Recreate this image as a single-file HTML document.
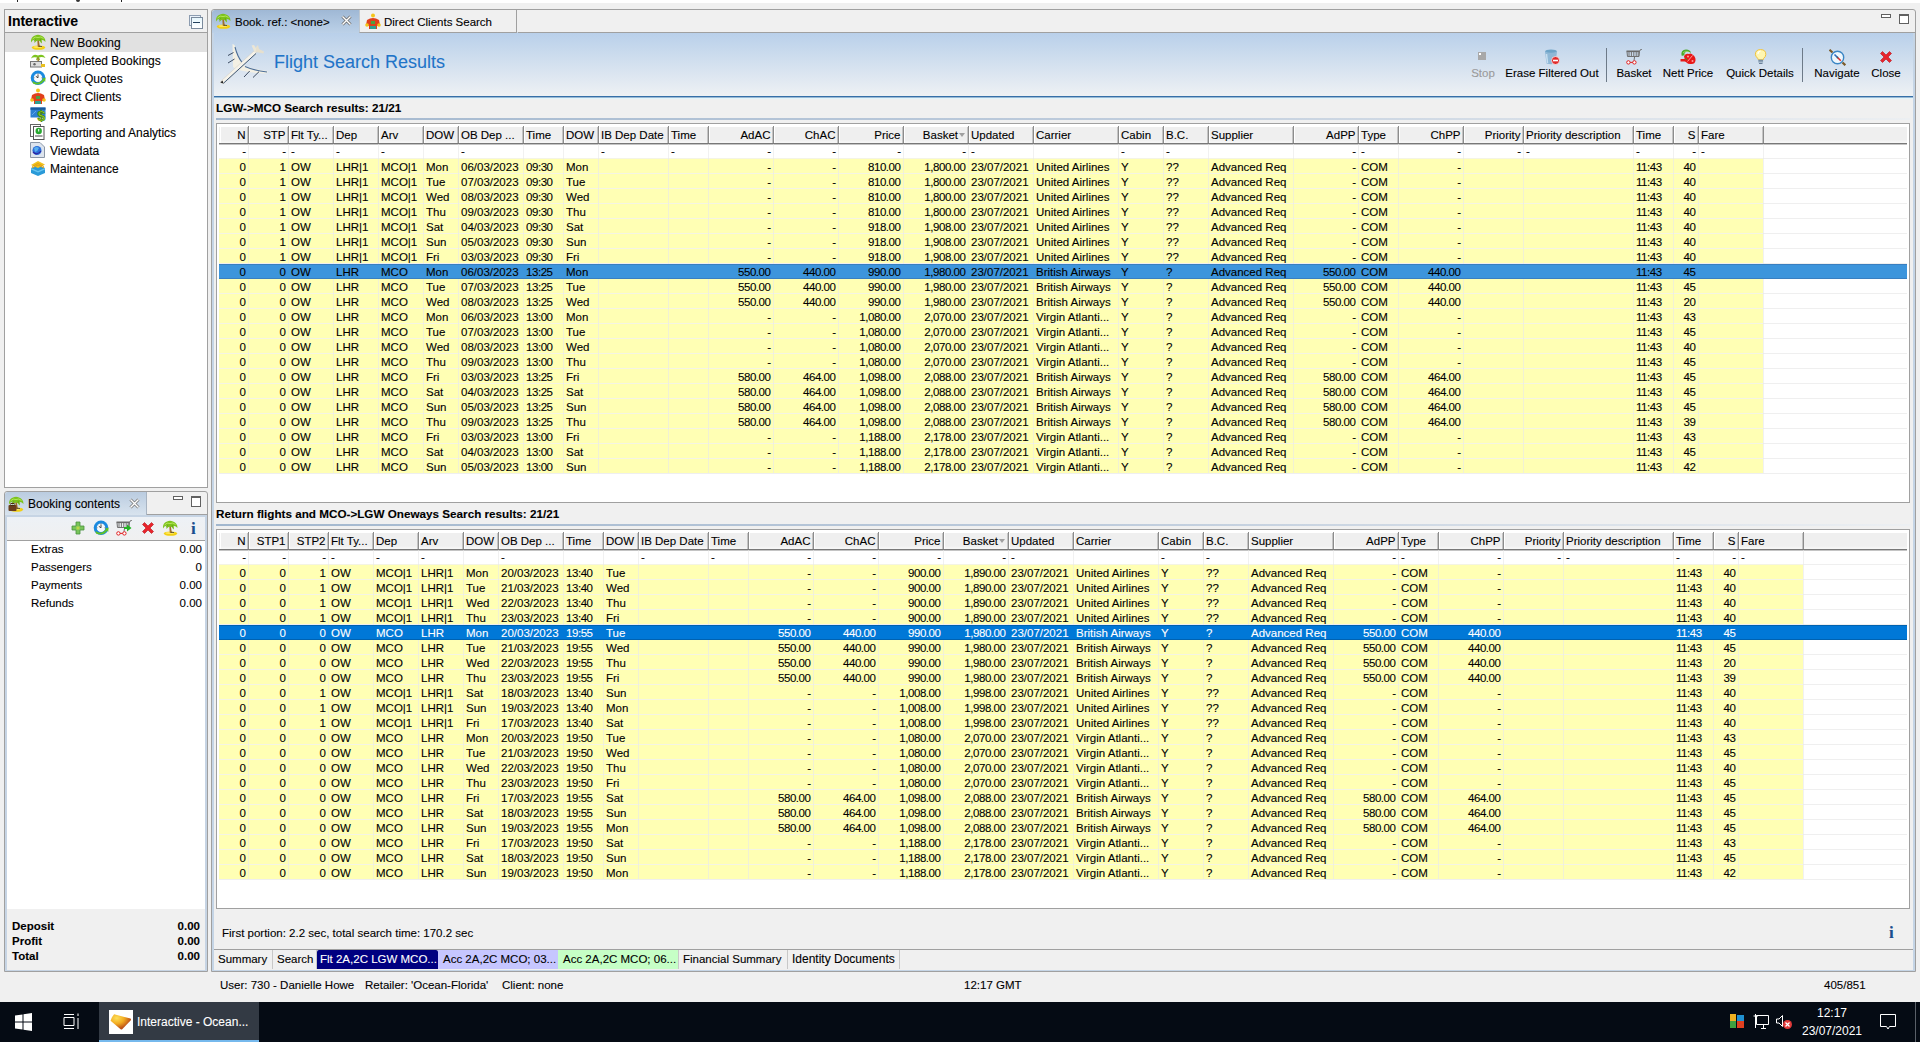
<!DOCTYPE html>
<html><head><meta charset="utf-8"><title>Interactive</title>
<style>
html,body{margin:0;padding:0}
body{width:1920px;height:1042px;overflow:hidden;background:#f0f0f0;position:relative;font-family:"Liberation Sans",sans-serif;font-size:11.5px;color:#000}
.a{position:absolute}
#topstrip{position:absolute;left:0;top:0;width:1920px;height:3px;background:#fff}
.box{position:absolute;box-sizing:border-box;border:1px solid #a0a0a0}
.txt{position:absolute;white-space:nowrap;line-height:15px}
.b{font-weight:bold}
/* tables */
.hdr{position:absolute;height:15px;background:linear-gradient(#f4f4f4,#ececec);border-bottom:2px solid #8c8c8c}
.hc{position:absolute;height:15px;line-height:15px;box-sizing:border-box;padding:0 3px;white-space:nowrap;overflow:hidden;border-right:1px solid #c8c8c8}
.hs{position:absolute;width:1px;background:#8c8c8c}
.R{text-align:right}
.L{text-align:left}
.vg{position:absolute;width:1px;background:#ededed}
.row{position:absolute;height:15px}
.row .c{position:absolute;top:0;height:15px;line-height:15px;box-sizing:border-box;padding:0 3px;white-space:nowrap;overflow:hidden}
.frow{background:transparent}
.drow{background:#ffffb4;box-shadow:inset 0 1px 0 #f4f4e4}
.sel1{background:#3d95dc;box-shadow:inset 0 1px 0 #3a7fc0,inset 0 -1px 0 #3a7fc0}
.sel2{background:#0078d7;color:#fff;box-shadow:inset 0 1px 0 #0062b0,inset 0 -1px 0 #0062b0}
.sort{position:absolute;right:0px;top:5px;width:0;height:0;border-left:4px solid transparent;border-right:4px solid transparent;border-top:5px solid #9a9a9a}
.hdr{height:16px;border-bottom:1px solid #8a8a8a}
.hc{height:16px;line-height:16px;border-right:1px solid #c4c4c4}
.frow{height:14px}
.frow .c{line-height:14px;top:0}
.drow .c,.sel1 .c,.sel2 .c{top:1px;line-height:14px}
.sel1{color:#000}
body{-webkit-text-stroke:0.2px currentColor}
.hc{padding-right:1.5px;box-shadow:inset 1px 0 0 #fff}
.vg{background:rgba(232,232,232,0.6)}
.drow .c,.sel1 .c,.sel2 .c{top:2px;line-height:14px}
.sel1 .c,.sel2 .c{top:1px}
.sel1,.sel2{height:15px}
.sort{right:2px;top:6px;border-left-width:3px;border-right-width:3px;border-top-width:4px;border-top-color:#a0a0a0}
body{-webkit-text-stroke:0.1px currentColor}
.row .c.R{padding-right:2px}
.hc{padding-left:2px}
.hg{position:absolute;height:1px;background:#efefef}
.hdr{background:linear-gradient(#efefef 0,#efefef 13px,#f6f6f6 15px);border-bottom-color:#787878;box-shadow:0 1px 0 #c4c4c4}
.row .c.n{letter-spacing:-0.45px}
.row .c.d{letter-spacing:0}
.row .c.R.n{padding-right:2.5px}

</style></head><body>
<div id="topstrip"></div>
<div class="a" style="left:17px;top:0;width:1px;height:2px;background:#222"></div>
<div class="a" style="left:76px;top:0;width:4px;height:2px;background:#333;border-radius:0 0 2px 2px"></div>
<div class="a" style="left:121px;top:0;width:1px;height:2px;background:#222"></div>

<svg width="0" height="0" style="position:absolute">
 <defs>
  <symbol id="palm" viewBox="0 0 16 16">
   <ellipse cx="8.5" cy="13.6" rx="6.8" ry="2.2" fill="#f2cf12"/>
   <ellipse cx="8" cy="13" rx="4.5" ry="1" fill="#ffe65a"/>
   <path d="M7.3 6 L8.9 6 L9.8 13 L7.8 13Z" fill="#a0702a"/>
   <path d="M9 12.2 L12 12.6" stroke="#333" stroke-width="0.8"/>
   <path d="M1 8.5 Q0.5 3 5 1.5 Q8 0 11 1.5 Q15.5 3 15.5 8 Q13.5 5.5 11.5 6 Q12.5 8 11.5 9.5 Q10 6.5 8 6.5 Q6 6.5 4.5 9 Q4 7 5 5.5 Q2.5 5.5 1 8.5Z" fill="#7cc21c"/>
   <path d="M2.5 5 Q5 2 8 3.5 Q11 2 13.5 4.5" stroke="#b4e85a" stroke-width="1" fill="none"/>
   <path d="M4 7 L5.5 5 M11 7 L10 5" stroke="#5a9a10" stroke-width="0.7"/>
  </symbol>
  <symbol id="clock" viewBox="0 0 16 16">
   <circle cx="8" cy="7.8" r="7.3" fill="#1a8ae0"/>
   <circle cx="8" cy="7.8" r="4.3" fill="#f6f9fc"/>
   <path d="M8 4.5 V7.8 L5.8 6.3" stroke="#333" stroke-width="0.9" fill="none"/>
   <circle cx="8" cy="3.8" r="0.5" fill="#555"/><circle cx="12" cy="7.8" r="0.5" fill="#555"/><circle cx="4" cy="7.8" r="0.5" fill="#555"/>
   <path d="M2.5 11 Q8 15 13 9.5 L11.8 8.8 L15.6 7.6 L15.2 12 L14 10.8 Q10 16.5 3 13.5Z" fill="#62c224"/>
  </symbol>
  <symbol id="xred" viewBox="0 0 16 16">
   <path d="M2.5 4.5 L4.5 2.5 L8 6 L11.5 2.5 L13.5 4.5 L10 8 L13.5 11.5 L11.5 13.5 L8 10 L4.5 13.5 L2.5 11.5 L6 8Z" fill="#e8242c" stroke="#b5121a" stroke-width="0.6"/>
  </symbol>
  <symbol id="cart" viewBox="0 0 16 16">
   <path d="M0.5 2.3 H13.8" stroke="#6a6a6a" stroke-width="1.6"/>
   <path d="M1 2.5 L1.5 7.5 H13 L13.5 2.5" fill="none" stroke="#707070" stroke-width="1"/>
   <path d="M3 3 V7.5 M5.4 3 V7.5 M7.8 3 V7.5 M10.2 3 V7.5 M12.2 3 V7.5" stroke="#707070" stroke-width="1"/>
   <path d="M13.5 2.5 L14.6 0.5 H15.8" stroke="#707070" stroke-width="1" fill="none"/>
   <path d="M8.6 7.8 L8 11.5" stroke="#707070" stroke-width="1"/>
   <circle cx="2.4" cy="13.4" r="1.7" fill="#fff" stroke="#e01e1e" stroke-width="1"/>
   <circle cx="8.4" cy="13.4" r="1.7" fill="#fff" stroke="#e01e1e" stroke-width="1"/>
   <path d="M4.1 13.4 H6.7" stroke="#e01e1e" stroke-width="1"/>
  </symbol>
 </defs>
</svg>

<!-- LEFT PANEL: Interactive -->
<div class="box" style="left:4px;top:9px;width:204px;height:479px;background:#fff"></div>
<div class="a" style="left:5px;top:10px;width:202px;height:22px;background:#f0f0f0;border-bottom:1px solid #a0a0a0"></div>
<div class="txt b" style="left:8px;top:14px;font-size:14px">Interactive</div>
<div class="a" style="left:189px;top:15px;width:10px;height:9px;border:1px solid #8c9cb0;background:#eaf2fa"></div>
<div class="a" style="left:191px;top:17px;width:10px;height:10px;border:1px solid #7a8a9c;background:linear-gradient(#e6f6fc,#ffffff)"></div>
<div class="a" style="left:193px;top:22px;width:7px;height:1px;background:#24405c"></div>
<div class="a" style="left:5px;top:33px;width:202px;height:19px;background:#e1e1e1"></div>
<svg class="a" style="left:30px;top:34px" width="16" height="16"><use href="#palm"/></svg>
<svg class="a" style="left:30px;top:52px" width="16" height="16"><path d="M1 6.5 Q3 1 8 3.5 Q13 1 15.5 6 Q12 4.5 9 5.5 Q10.5 7.5 10 8.5 Q8 6.5 6 8.5 Q6 7 7 5.5 Q3.5 4.5 1 6.5Z" fill="#7dc41e"/><path d="M7.3 5.5 H8.7 L9 10 H7.5Z" fill="#a8782e"/><rect x="0.5" y="9.5" width="11" height="5.5" fill="#ddd" stroke="#777" stroke-width="1"/><circle cx="4.5" cy="12.2" r="1.2" fill="#666"/><rect x="11" y="12" width="4" height="3" fill="#e8c020"/></svg>
<svg class="a" style="left:30px;top:70px" width="16" height="16"><use href="#clock"/></svg>
<svg class="a" style="left:30px;top:88px" width="16" height="16"><circle cx="8" cy="2.5" r="2" fill="#f5c518"/><path d="M2 7 Q8 3 14 7 L15 12 L12 13 V16 H4 V13 L1 12Z" fill="#e0401c"/><circle cx="2" cy="12" r="1.8" fill="#f5c518"/><circle cx="14" cy="12" r="1.8" fill="#f5c518"/><rect x="6" y="8" width="4" height="3" fill="#50a040"/><rect x="5" y="13" width="6" height="3" fill="#30a090"/></svg>
<svg class="a" style="left:30px;top:106px" width="16" height="16"><path d="M0.5 1.5 H15.5 V11.5 H0.5Z" fill="#2b80d2"/><path d="M0.5 1.5 H15.5 V3.8 H0.5Z" fill="#1a5a9c"/><path d="M2 9 L6 5" stroke="#60a8e8" stroke-width="1"/><path d="M8.5 6 L15 6 L14 13 L11 16 L8 13Z" fill="#2b80d2" opacity="0"/><text x="7.5" y="14.5" font-family="Liberation Sans" font-weight="bold" font-size="14" fill="#94d21e" stroke="#3d7a0e" stroke-width="0.6">$</text></svg>
<svg class="a" style="left:30px;top:124px" width="16" height="16"><rect x="0.5" y="0.5" width="10" height="12" fill="#fff" stroke="#666"/><rect x="3.5" y="2.5" width="10.5" height="13" fill="#fff" stroke="#555"/><circle cx="8.7" cy="7" r="3.2" fill="#28a830"/><rect x="8.2" y="5" width="1" height="2.5" fill="#fff"/><path d="M5 12 H12.5" stroke="#444"/></svg>
<svg class="a" style="left:30px;top:142px" width="16" height="16"><path d="M0.5 0.5 H10 L14.5 5 V15.5 H0.5Z" fill="#dde4ee" stroke="#8a96a6"/><circle cx="7" cy="8.5" r="4.5" fill="#2a6ed8"/><path d="M4 6 Q7 4 9 6 Q8 9 5 10Z" fill="#5ab0f0"/><path d="M3 10 Q7 14 11 9" stroke="#3020a0" stroke-width="1.2" fill="none"/></svg>
<svg class="a" style="left:30px;top:160px" width="16" height="16"><path d="M1 8 L8 5 L15 8 L15 13 L8 16 L1 13Z" fill="#2a9ad8"/><path d="M1 5 L8 1 L15 4.5 L8 8Z" fill="#f2c21e"/><path d="M2 6.5 L8 3.5 L14 6.5 M2 8 L8 5 L14 8" stroke="#e0a010" stroke-width="1" fill="none"/><path d="M1 8 L8 11 L15 8 V9.5 L8 12.5 L1 9.5Z" fill="#66c4f0"/></svg>
<div class="txt" style="left:50px;top:36px;font-size:12px">New Booking</div>
<div class="txt" style="left:50px;top:54px;font-size:12px">Completed Bookings</div>
<div class="txt" style="left:50px;top:72px;font-size:12px">Quick Quotes</div>
<div class="txt" style="left:50px;top:90px;font-size:12px">Direct Clients</div>
<div class="txt" style="left:50px;top:108px;font-size:12px">Payments</div>
<div class="txt" style="left:50px;top:126px;font-size:12px">Reporting and Analytics</div>
<div class="txt" style="left:50px;top:144px;font-size:12px">Viewdata</div>
<div class="txt" style="left:50px;top:162px;font-size:12px">Maintenance</div>

<!-- LEFT PANEL: Booking contents -->
<div class="box" style="left:4px;top:491px;width:204px;height:481px;background:#f0f0f0;border-radius:3px 3px 0 0"></div>
<div class="a" style="left:5px;top:492px;width:141px;height:23px;background:linear-gradient(#bacce0,#d8e3ee);border-right:1px solid #a8b4c2;border-top-left-radius:3px"></div>
<div class="a" style="left:147px;top:514px;width:60px;height:1px;background:#a0a0a0"></div>
<div class="a" style="left:5px;top:515px;width:202px;height:456px;box-sizing:border-box;border:2px solid #c6d4e4;border-bottom-width:1px"></div>
<div class="a" style="left:7px;top:517px;width:198px;height:23px;background:linear-gradient(#edf1f6,#f0f0f0);border-bottom:1px solid #a0a0a0"></div>
<svg class="a" style="left:8px;top:496px" width="16" height="16"><use href="#palm"/><rect x="0.5" y="9" width="8" height="6" rx="1" fill="#6a3e1e"/><rect x="3" y="7.5" width="3" height="2" fill="none" stroke="#4a2a10"/></svg>
<div class="txt" style="left:28px;top:497px;font-size:12px">Booking contents</div>
<svg class="a" style="left:129px;top:498px" width="11" height="11"><path d="M1.5 1.5 L9.5 9.5 M9.5 1.5 L1.5 9.5" stroke="#777" stroke-width="3"/><path d="M1.5 1.5 L9.5 9.5 M9.5 1.5 L1.5 9.5" stroke="#fff" stroke-width="1.4"/></svg>
<div class="a" style="left:173px;top:496px;width:8px;height:2px;border:1px solid #606060;background:#fff"></div>
<div class="a" style="left:191px;top:496px;width:8px;height:8px;border:1px solid #606060;border-top-width:2px;background:#fff"></div>
<svg class="a" style="left:71px;top:521px" width="14" height="14"><path d="M5 1 H9 V5 H13 V9 H9 V13 H5 V9 H1 V5 H5Z" fill="#78c45a" stroke="#4a9240" stroke-width="0.8"/><rect x="5.5" y="5.5" width="3" height="3" fill="#b8d84a"/></svg>
<svg class="a" style="left:93px;top:520px" width="16" height="16"><use href="#clock"/></svg>
<svg class="a" style="left:116px;top:520px" width="16" height="16"><use href="#cart"/><path d="M8 7 H11 V4.5 L15.5 8 L11 11.5 V9 H8Z" fill="#22b422"/></svg>
<svg class="a" style="left:140px;top:520px" width="16" height="16"><use href="#xred"/></svg>
<svg class="a" style="left:162px;top:520px" width="16" height="16"><use href="#palm"/></svg>
<div class="a" style="left:191px;top:520px;font-family:'Liberation Serif',serif;font-weight:bold;font-size:17px;line-height:18px;color:#1a4f8f">i</div>
<div class="a" style="left:7px;top:541px;width:198px;height:368px;background:#fff"></div>
<div class="txt" style="left:31px;top:542px">Extras</div><div class="txt" style="left:150px;top:542px;width:52px;text-align:right">0.00</div>
<div class="txt" style="left:31px;top:560px">Passengers</div><div class="txt" style="left:150px;top:560px;width:52px;text-align:right">0</div>
<div class="txt" style="left:31px;top:578px">Payments</div><div class="txt" style="left:150px;top:578px;width:52px;text-align:right">0.00</div>
<div class="txt" style="left:31px;top:596px">Refunds</div><div class="txt" style="left:150px;top:596px;width:52px;text-align:right">0.00</div>
<div class="txt b" style="left:12px;top:919px">Deposit</div><div class="txt b" style="left:150px;top:919px;width:50px;text-align:right">0.00</div>
<div class="txt b" style="left:12px;top:934px">Profit</div><div class="txt b" style="left:150px;top:934px;width:50px;text-align:right">0.00</div>
<div class="txt b" style="left:12px;top:949px">Total</div><div class="txt b" style="left:150px;top:949px;width:50px;text-align:right">0.00</div>

<!-- EDITOR -->
<div class="box" style="left:211px;top:9px;width:1705px;height:963px;background:#f0f0f0;border-radius:3px 3px 0 0"></div>
<div class="a" style="left:212px;top:32px;width:1703px;height:939px;border:2px solid #c5d5e6;border-bottom-width:1px;box-sizing:border-box"></div>
<div class="a" style="left:518px;top:32px;width:1397px;height:1px;background:#a0a0a0"></div>
<!-- tabs -->
<div class="a" style="left:212px;top:10px;width:147px;height:23px;background:linear-gradient(#9fb8d5,#bcd1e8);border-top-left-radius:3px"></div>
<svg class="a" style="left:215px;top:13px" width="16" height="16"><use href="#palm"/></svg>
<div class="txt" style="left:235px;top:15px">Book. ref.: &lt;none&gt;</div>
<svg class="a" style="left:341px;top:15px" width="11" height="11"><path d="M1.5 1.5 L9.5 9.5 M9.5 1.5 L1.5 9.5" stroke="#6a6a6a" stroke-width="3"/><path d="M1.5 1.5 L9.5 9.5 M9.5 1.5 L1.5 9.5" stroke="#fff" stroke-width="1.4"/></svg>
<div class="a" style="left:359px;top:10px;width:158px;height:22px;background:#f0f0f0;border-right:1px solid #a0a0a0;border-bottom:1px solid #a0a0a0;border-left:1px solid #c0c8d0;box-sizing:border-box;height:23px"></div>
<svg class="a" style="left:365px;top:13px" width="16" height="16"><circle cx="8" cy="2.5" r="2" fill="#f5c518"/><path d="M2 7 Q8 3 14 7 L15 12 L12 13 V16 H4 V13 L1 12Z" fill="#e0401c"/><circle cx="2" cy="12" r="1.8" fill="#f5c518"/><circle cx="14" cy="12" r="1.8" fill="#f5c518"/><rect x="6" y="8" width="4" height="3" fill="#50a040"/><rect x="5" y="13" width="6" height="3" fill="#30a090"/></svg>
<div class="txt" style="left:384px;top:15px">Direct Clients Search</div>
<div class="a" style="left:1881px;top:14px;width:8px;height:2px;border:1px solid #606060;background:#fff"></div>
<div class="a" style="left:1899px;top:14px;width:8px;height:7px;border:1px solid #606060;border-top-width:2px;background:#fff"></div>
<!-- banner -->
<div class="a" style="left:214px;top:33px;width:1699px;height:63px;background:linear-gradient(#b9d0ea,#eef1f4)"></div>
<div class="a" style="left:214px;top:96px;width:1699px;height:2px;background:linear-gradient(#3570a8 50%,#9ab8d4 50%)"></div><div class="a" style="left:214px;top:98px;width:1699px;height:1px;background:#e2f6fa"></div>
<svg class="a" style="left:214px;top:36px" width="64" height="54">
 <path d="M18.5 8 Q20.5 8 21.5 11 Q24 20 28 26 L31 29 L22 33 L19 31 Z" fill="#f3f0e4"/>
 <path d="M21 11 Q23.5 21 28.5 27" stroke="#4a6d98" stroke-width="1.1" fill="none"/>
 <path d="M29 29 Q38 33.5 53.5 35 Q54 37 52 37.5 Q40 37.5 24 34 Z" fill="#f3f0e4"/>
 <path d="M31 30.5 Q40 34.5 53 36" stroke="#4a6d98" stroke-width="1.1" fill="none"/>
 <path d="M6.5 45.5 L40 15 Q42 15 42.5 17 L10 47.5 Q7 48 6.5 45.5Z" fill="#f6f3ea" stroke="#c9c3b2" stroke-width="0.4"/>
 <path d="M9.5 47.2 L42 17.5" stroke="#3d5878" stroke-width="1"/>
 <path d="M37.5 9.5 L40 9 L43 14 L41 17 Z" fill="#ebe6d6"/>
 <path d="M42 11 L44 9 L45 13 L50 15.5 L49.5 17.5 L42 16 Z" fill="#e6e0ce"/>
 <path d="M14 19.5 L19.5 16.5 M14 27 L20.5 23 M30 41 L35.7 35 M39 41.5 L45 35.7" stroke="#2a3a50" stroke-width="0.9"/>
 <path d="M6.3 46.5 L8.5 44.5 L9.5 47.5 Z" fill="#222"/>
</svg>
<div class="txt" style="left:274px;top:52px;font-size:18px;line-height:20px;color:#1f74c8">Flight Search Results</div>

<!-- toolbar -->
<div class="a" style="left:1478px;top:52px;width:8px;height:8px;background:#a8a8a8"></div>
<div class="a" style="left:1479px;top:53px;width:2px;height:2px;background:#fff"></div>
<div class="txt" style="left:1453px;top:66px;width:60px;text-align:center;color:#9a9a9a">Stop</div>
<svg class="a" style="left:1544px;top:49px" width="16" height="16"><ellipse cx="7" cy="2.5" rx="6" ry="2" fill="#6ea4c8"/><path d="M1 2.5 L2.5 14.5 Q7 16 11.5 14.5 L13 2.5 Q7 5 1 2.5Z" fill="#8fb8d6"/><path d="M2.5 5 L3.5 14" stroke="#c8def0" stroke-width="1.5"/><circle cx="11.5" cy="11.5" r="4" fill="#e02a2a" stroke="#fff" stroke-width="0.7"/><rect x="9" y="10.7" width="5" height="1.6" fill="#fff"/></svg>
<div class="txt" style="left:1492px;top:66px;width:120px;text-align:center">Erase Filtered Out</div>
<div class="a" style="left:1606px;top:48px;width:1px;height:34px;background:#6d7a88"></div>
<svg class="a" style="left:1626px;top:49px" width="16" height="16"><use href="#cart"/></svg>
<div class="txt" style="left:1604px;top:66px;width:60px;text-align:center">Basket</div>
<svg class="a" style="left:1680px;top:49px" width="16" height="16"><path d="M1.5 6.5 Q0.5 1 6 0.5 Q10.5 0.5 11 4 Q9 2.5 6.5 2.8 Q4 3.5 4.5 6 Q3 7 1.5 6.5Z" fill="#4aa82a"/><path d="M3 4 Q5 1.5 8.5 2.5" stroke="#9ad860" stroke-width="1" fill="none"/><path d="M0.5 10 H6 V12.5 H0.5Z" fill="#e41c1c"/><path d="M4 7 Q6 4 9 5 Q11 3.5 13 6 Q15.8 8 15.5 11.5 Q15 15 11.5 15 Q8 15.5 6.5 13.5 Q4 12 4.5 9.5Z" fill="#e81818"/><path d="M7.5 12.5 L12.5 6.5" stroke="#ff9a9a" stroke-width="1"/><circle cx="8" cy="7.5" r="1" fill="#ff9a9a"/><circle cx="12.5" cy="12" r="1" fill="#ff9a9a"/><path d="M5 9 L7 11" stroke="#3a9a2a" stroke-width="1"/></svg>
<div class="txt" style="left:1648px;top:66px;width:80px;text-align:center">Nett Price</div>
<svg class="a" style="left:1753px;top:49px" width="16" height="16"><path d="M7.6 0.6 Q12.8 0.6 12.8 5.4 Q12.8 7.8 10.5 9.5 V10.5 H5 V9.5 Q2.4 7.8 2.4 5.4 Q2.4 0.6 7.6 0.6Z" fill="#fff6b0" stroke="#f2c23a" stroke-width="1"/><path d="M5 5 Q5 2.5 7.5 2" stroke="#fff" stroke-width="1.2" fill="none"/><rect x="5.3" y="10.5" width="4.8" height="3.2" fill="#9ab0c4"/><path d="M5.5 11.8 H10 M6 14.5 H9.5" stroke="#6a8098" stroke-width="1"/></svg>
<div class="txt" style="left:1715px;top:66px;width:90px;text-align:center">Quick Details</div>
<div class="a" style="left:1802px;top:48px;width:1px;height:34px;background:#6d7a88"></div>
<svg class="a" style="left:1829px;top:49px" width="17" height="17"><circle cx="8.5" cy="8.5" r="6.2" fill="#eef7fd" stroke="#3c86c4" stroke-width="1.4"/><path d="M0.5 0.8 L3.5 3.5 M13.5 13.5 L16.3 16.2" stroke="#7a5a2a" stroke-width="2.2"/><path d="M5.5 5.5 L8.8 8.8" stroke="#2a6cc0" stroke-width="1.6"/><path d="M8.8 8.8 L11.8 11.8" stroke="#e02a2a" stroke-width="1.6"/><circle cx="8.5" cy="8.5" r="0.9" fill="#555"/></svg>
<div class="txt" style="left:1807px;top:66px;width:60px;text-align:center">Navigate</div>
<svg class="a" style="left:1878px;top:49px" width="16" height="16"><use href="#xred"/></svg>
<div class="txt" style="left:1856px;top:66px;width:60px;text-align:center">Close</div>

<div class="txt b" style="left:216px;top:100px;font-size:11.7px">LGW-&gt;MCO Search results: 21/21</div>
<div class="a" style="left:216px;top:118px;width:1694px;height:2px;background:linear-gradient(to right,#a2b7ce,#bccadb 50%,#eceff2)"></div>
<div class="a" style="left:216px;top:123px;width:1694px;height:380px;background:#fff;border:1px solid #a0a0a0;box-sizing:border-box"></div>
<div class="hdr" style="top:127px;left:219px;width:1688px"></div>
<div class="hc R" style="top:127px;left:220px;width:28px;">N</div>
<div class="hs" style="top:126px;left:248px;height:17px"></div>
<div class="hc R" style="top:127px;left:249px;width:39px;">STP</div>
<div class="hs" style="top:126px;left:288px;height:17px"></div>
<div class="hc L" style="top:127px;left:289px;width:44px;">Flt Ty...</div>
<div class="hs" style="top:126px;left:333px;height:17px"></div>
<div class="hc L" style="top:127px;left:334px;width:44px;">Dep</div>
<div class="hs" style="top:126px;left:378px;height:17px"></div>
<div class="hc L" style="top:127px;left:379px;width:44px;">Arv</div>
<div class="hs" style="top:126px;left:423px;height:17px"></div>
<div class="hc L" style="top:127px;left:424px;width:34px;">DOW</div>
<div class="hs" style="top:126px;left:458px;height:17px"></div>
<div class="hc L" style="top:127px;left:459px;width:64px;">OB Dep ...</div>
<div class="hs" style="top:126px;left:523px;height:17px"></div>
<div class="hc L" style="top:127px;left:524px;width:39px;">Time</div>
<div class="hs" style="top:126px;left:563px;height:17px"></div>
<div class="hc L" style="top:127px;left:564px;width:34px;">DOW</div>
<div class="hs" style="top:126px;left:598px;height:17px"></div>
<div class="hc L" style="top:127px;left:599px;width:69px;">IB Dep Date</div>
<div class="hs" style="top:126px;left:668px;height:17px"></div>
<div class="hc L" style="top:127px;left:669px;width:39px;">Time</div>
<div class="hs" style="top:126px;left:708px;height:17px"></div>
<div class="hc R" style="top:127px;left:709px;width:64px;">AdAC</div>
<div class="hs" style="top:126px;left:773px;height:17px"></div>
<div class="hc R" style="top:127px;left:774px;width:64px;">ChAC</div>
<div class="hs" style="top:126px;left:838px;height:17px"></div>
<div class="hc R" style="top:127px;left:839px;width:64px;">Price</div>
<div class="hs" style="top:126px;left:903px;height:17px"></div>
<div class="hc R" style="top:127px;left:904px;width:64px;padding-right:9px;">Basket<i class="sort"></i></div>
<div class="hs" style="top:126px;left:968px;height:17px"></div>
<div class="hc L" style="top:127px;left:969px;width:64px;">Updated</div>
<div class="hs" style="top:126px;left:1033px;height:17px"></div>
<div class="hc L" style="top:127px;left:1034px;width:84px;">Carrier</div>
<div class="hs" style="top:126px;left:1118px;height:17px"></div>
<div class="hc L" style="top:127px;left:1119px;width:44px;">Cabin</div>
<div class="hs" style="top:126px;left:1163px;height:17px"></div>
<div class="hc L" style="top:127px;left:1164px;width:44px;">B.C.</div>
<div class="hs" style="top:126px;left:1208px;height:17px"></div>
<div class="hc L" style="top:127px;left:1209px;width:84px;">Supplier</div>
<div class="hs" style="top:126px;left:1293px;height:17px"></div>
<div class="hc R" style="top:127px;left:1294px;width:64px;">AdPP</div>
<div class="hs" style="top:126px;left:1358px;height:17px"></div>
<div class="hc L" style="top:127px;left:1359px;width:39px;">Type</div>
<div class="hs" style="top:126px;left:1398px;height:17px"></div>
<div class="hc R" style="top:127px;left:1399px;width:64px;">ChPP</div>
<div class="hs" style="top:126px;left:1463px;height:17px"></div>
<div class="hc R" style="top:127px;left:1464px;width:59px;">Priority</div>
<div class="hs" style="top:126px;left:1523px;height:17px"></div>
<div class="hc L" style="top:127px;left:1524px;width:109px;">Priority description</div>
<div class="hs" style="top:126px;left:1633px;height:17px"></div>
<div class="hc L" style="top:127px;left:1634px;width:39px;">Time</div>
<div class="hs" style="top:126px;left:1673px;height:17px"></div>
<div class="hc R" style="top:127px;left:1674px;width:24px;">S</div>
<div class="hs" style="top:126px;left:1698px;height:17px"></div>
<div class="hc L" style="top:127px;left:1699px;width:64px;">Fare</div>
<div class="hs" style="top:126px;left:1763px;height:17px"></div>
<div class="hg" style="top:158px;left:219px;width:1688px"></div>
<div class="hg" style="top:173px;left:219px;width:1688px"></div>
<div class="hg" style="top:188px;left:219px;width:1688px"></div>
<div class="hg" style="top:203px;left:219px;width:1688px"></div>
<div class="hg" style="top:218px;left:219px;width:1688px"></div>
<div class="hg" style="top:233px;left:219px;width:1688px"></div>
<div class="hg" style="top:248px;left:219px;width:1688px"></div>
<div class="hg" style="top:263px;left:219px;width:1688px"></div>
<div class="hg" style="top:278px;left:219px;width:1688px"></div>
<div class="hg" style="top:293px;left:219px;width:1688px"></div>
<div class="hg" style="top:308px;left:219px;width:1688px"></div>
<div class="hg" style="top:323px;left:219px;width:1688px"></div>
<div class="hg" style="top:338px;left:219px;width:1688px"></div>
<div class="hg" style="top:353px;left:219px;width:1688px"></div>
<div class="hg" style="top:368px;left:219px;width:1688px"></div>
<div class="hg" style="top:383px;left:219px;width:1688px"></div>
<div class="hg" style="top:398px;left:219px;width:1688px"></div>
<div class="hg" style="top:413px;left:219px;width:1688px"></div>
<div class="hg" style="top:428px;left:219px;width:1688px"></div>
<div class="hg" style="top:443px;left:219px;width:1688px"></div>
<div class="hg" style="top:458px;left:219px;width:1688px"></div>
<div class="hg" style="top:473px;left:219px;width:1688px"></div>
<div class="row frow" style="top:144px;left:219px;width:1544px"><span class="c R" style="left:0px;width:29px">-</span><span class="c R" style="left:29px;width:40px">-</span><span class="c L" style="left:69px;width:45px">-</span><span class="c L" style="left:114px;width:45px">-</span><span class="c L" style="left:159px;width:45px">-</span><span class="c L" style="left:239px;width:65px">-</span><span class="c L" style="left:379px;width:70px">-</span><span class="c L" style="left:449px;width:40px">-</span><span class="c R" style="left:489px;width:65px">-</span><span class="c R" style="left:554px;width:65px">-</span><span class="c R" style="left:619px;width:65px">-</span><span class="c R" style="left:684px;width:65px">-</span><span class="c L" style="left:749px;width:65px">-</span><span class="c L" style="left:899px;width:45px">-</span><span class="c L" style="left:944px;width:45px">-</span><span class="c R" style="left:1074px;width:65px">-</span><span class="c L" style="left:1139px;width:40px">-</span><span class="c R" style="left:1179px;width:65px">-</span><span class="c R" style="left:1244px;width:60px">-</span><span class="c L" style="left:1304px;width:110px">-</span><span class="c L" style="left:1414px;width:40px">-</span><span class="c R" style="left:1454px;width:25px">-</span><span class="c L" style="left:1479px;width:65px">-</span></div>
<div class="row drow" style="top:158px;left:219px;width:1544px"><span class="c R n" style="left:0px;width:29px">0</span><span class="c R n" style="left:29px;width:40px">1</span><span class="c L" style="left:69px;width:45px">OW</span><span class="c L" style="left:114px;width:45px">LHR|1</span><span class="c L" style="left:159px;width:45px">MCO|1</span><span class="c L" style="left:204px;width:35px">Mon</span><span class="c L d" style="left:239px;width:65px">06/03/2023</span><span class="c L n" style="left:304px;width:40px">09:30</span><span class="c L" style="left:344px;width:35px">Mon</span><span class="c R" style="left:489px;width:65px">-</span><span class="c R" style="left:554px;width:65px">-</span><span class="c R n" style="left:619px;width:65px">810.00</span><span class="c R n" style="left:684px;width:65px">1,800.00</span><span class="c L d" style="left:749px;width:65px">23/07/2021</span><span class="c L" style="left:814px;width:85px">United Airlines</span><span class="c L" style="left:899px;width:45px">Y</span><span class="c L" style="left:944px;width:45px">??</span><span class="c L" style="left:989px;width:85px">Advanced Req</span><span class="c R" style="left:1074px;width:65px">-</span><span class="c L" style="left:1139px;width:40px">COM</span><span class="c R" style="left:1179px;width:65px">-</span><span class="c L n" style="left:1414px;width:40px">11:43</span><span class="c R n" style="left:1454px;width:25px">40</span></div>
<div class="row drow" style="top:173px;left:219px;width:1544px"><span class="c R n" style="left:0px;width:29px">0</span><span class="c R n" style="left:29px;width:40px">1</span><span class="c L" style="left:69px;width:45px">OW</span><span class="c L" style="left:114px;width:45px">LHR|1</span><span class="c L" style="left:159px;width:45px">MCO|1</span><span class="c L" style="left:204px;width:35px">Tue</span><span class="c L d" style="left:239px;width:65px">07/03/2023</span><span class="c L n" style="left:304px;width:40px">09:30</span><span class="c L" style="left:344px;width:35px">Tue</span><span class="c R" style="left:489px;width:65px">-</span><span class="c R" style="left:554px;width:65px">-</span><span class="c R n" style="left:619px;width:65px">810.00</span><span class="c R n" style="left:684px;width:65px">1,800.00</span><span class="c L d" style="left:749px;width:65px">23/07/2021</span><span class="c L" style="left:814px;width:85px">United Airlines</span><span class="c L" style="left:899px;width:45px">Y</span><span class="c L" style="left:944px;width:45px">??</span><span class="c L" style="left:989px;width:85px">Advanced Req</span><span class="c R" style="left:1074px;width:65px">-</span><span class="c L" style="left:1139px;width:40px">COM</span><span class="c R" style="left:1179px;width:65px">-</span><span class="c L n" style="left:1414px;width:40px">11:43</span><span class="c R n" style="left:1454px;width:25px">40</span></div>
<div class="row drow" style="top:188px;left:219px;width:1544px"><span class="c R n" style="left:0px;width:29px">0</span><span class="c R n" style="left:29px;width:40px">1</span><span class="c L" style="left:69px;width:45px">OW</span><span class="c L" style="left:114px;width:45px">LHR|1</span><span class="c L" style="left:159px;width:45px">MCO|1</span><span class="c L" style="left:204px;width:35px">Wed</span><span class="c L d" style="left:239px;width:65px">08/03/2023</span><span class="c L n" style="left:304px;width:40px">09:30</span><span class="c L" style="left:344px;width:35px">Wed</span><span class="c R" style="left:489px;width:65px">-</span><span class="c R" style="left:554px;width:65px">-</span><span class="c R n" style="left:619px;width:65px">810.00</span><span class="c R n" style="left:684px;width:65px">1,800.00</span><span class="c L d" style="left:749px;width:65px">23/07/2021</span><span class="c L" style="left:814px;width:85px">United Airlines</span><span class="c L" style="left:899px;width:45px">Y</span><span class="c L" style="left:944px;width:45px">??</span><span class="c L" style="left:989px;width:85px">Advanced Req</span><span class="c R" style="left:1074px;width:65px">-</span><span class="c L" style="left:1139px;width:40px">COM</span><span class="c R" style="left:1179px;width:65px">-</span><span class="c L n" style="left:1414px;width:40px">11:43</span><span class="c R n" style="left:1454px;width:25px">40</span></div>
<div class="row drow" style="top:203px;left:219px;width:1544px"><span class="c R n" style="left:0px;width:29px">0</span><span class="c R n" style="left:29px;width:40px">1</span><span class="c L" style="left:69px;width:45px">OW</span><span class="c L" style="left:114px;width:45px">LHR|1</span><span class="c L" style="left:159px;width:45px">MCO|1</span><span class="c L" style="left:204px;width:35px">Thu</span><span class="c L d" style="left:239px;width:65px">09/03/2023</span><span class="c L n" style="left:304px;width:40px">09:30</span><span class="c L" style="left:344px;width:35px">Thu</span><span class="c R" style="left:489px;width:65px">-</span><span class="c R" style="left:554px;width:65px">-</span><span class="c R n" style="left:619px;width:65px">810.00</span><span class="c R n" style="left:684px;width:65px">1,800.00</span><span class="c L d" style="left:749px;width:65px">23/07/2021</span><span class="c L" style="left:814px;width:85px">United Airlines</span><span class="c L" style="left:899px;width:45px">Y</span><span class="c L" style="left:944px;width:45px">??</span><span class="c L" style="left:989px;width:85px">Advanced Req</span><span class="c R" style="left:1074px;width:65px">-</span><span class="c L" style="left:1139px;width:40px">COM</span><span class="c R" style="left:1179px;width:65px">-</span><span class="c L n" style="left:1414px;width:40px">11:43</span><span class="c R n" style="left:1454px;width:25px">40</span></div>
<div class="row drow" style="top:218px;left:219px;width:1544px"><span class="c R n" style="left:0px;width:29px">0</span><span class="c R n" style="left:29px;width:40px">1</span><span class="c L" style="left:69px;width:45px">OW</span><span class="c L" style="left:114px;width:45px">LHR|1</span><span class="c L" style="left:159px;width:45px">MCO|1</span><span class="c L" style="left:204px;width:35px">Sat</span><span class="c L d" style="left:239px;width:65px">04/03/2023</span><span class="c L n" style="left:304px;width:40px">09:30</span><span class="c L" style="left:344px;width:35px">Sat</span><span class="c R" style="left:489px;width:65px">-</span><span class="c R" style="left:554px;width:65px">-</span><span class="c R n" style="left:619px;width:65px">918.00</span><span class="c R n" style="left:684px;width:65px">1,908.00</span><span class="c L d" style="left:749px;width:65px">23/07/2021</span><span class="c L" style="left:814px;width:85px">United Airlines</span><span class="c L" style="left:899px;width:45px">Y</span><span class="c L" style="left:944px;width:45px">??</span><span class="c L" style="left:989px;width:85px">Advanced Req</span><span class="c R" style="left:1074px;width:65px">-</span><span class="c L" style="left:1139px;width:40px">COM</span><span class="c R" style="left:1179px;width:65px">-</span><span class="c L n" style="left:1414px;width:40px">11:43</span><span class="c R n" style="left:1454px;width:25px">40</span></div>
<div class="row drow" style="top:233px;left:219px;width:1544px"><span class="c R n" style="left:0px;width:29px">0</span><span class="c R n" style="left:29px;width:40px">1</span><span class="c L" style="left:69px;width:45px">OW</span><span class="c L" style="left:114px;width:45px">LHR|1</span><span class="c L" style="left:159px;width:45px">MCO|1</span><span class="c L" style="left:204px;width:35px">Sun</span><span class="c L d" style="left:239px;width:65px">05/03/2023</span><span class="c L n" style="left:304px;width:40px">09:30</span><span class="c L" style="left:344px;width:35px">Sun</span><span class="c R" style="left:489px;width:65px">-</span><span class="c R" style="left:554px;width:65px">-</span><span class="c R n" style="left:619px;width:65px">918.00</span><span class="c R n" style="left:684px;width:65px">1,908.00</span><span class="c L d" style="left:749px;width:65px">23/07/2021</span><span class="c L" style="left:814px;width:85px">United Airlines</span><span class="c L" style="left:899px;width:45px">Y</span><span class="c L" style="left:944px;width:45px">??</span><span class="c L" style="left:989px;width:85px">Advanced Req</span><span class="c R" style="left:1074px;width:65px">-</span><span class="c L" style="left:1139px;width:40px">COM</span><span class="c R" style="left:1179px;width:65px">-</span><span class="c L n" style="left:1414px;width:40px">11:43</span><span class="c R n" style="left:1454px;width:25px">40</span></div>
<div class="row drow" style="top:248px;left:219px;width:1544px"><span class="c R n" style="left:0px;width:29px">0</span><span class="c R n" style="left:29px;width:40px">1</span><span class="c L" style="left:69px;width:45px">OW</span><span class="c L" style="left:114px;width:45px">LHR|1</span><span class="c L" style="left:159px;width:45px">MCO|1</span><span class="c L" style="left:204px;width:35px">Fri</span><span class="c L d" style="left:239px;width:65px">03/03/2023</span><span class="c L n" style="left:304px;width:40px">09:30</span><span class="c L" style="left:344px;width:35px">Fri</span><span class="c R" style="left:489px;width:65px">-</span><span class="c R" style="left:554px;width:65px">-</span><span class="c R n" style="left:619px;width:65px">918.00</span><span class="c R n" style="left:684px;width:65px">1,908.00</span><span class="c L d" style="left:749px;width:65px">23/07/2021</span><span class="c L" style="left:814px;width:85px">United Airlines</span><span class="c L" style="left:899px;width:45px">Y</span><span class="c L" style="left:944px;width:45px">??</span><span class="c L" style="left:989px;width:85px">Advanced Req</span><span class="c R" style="left:1074px;width:65px">-</span><span class="c L" style="left:1139px;width:40px">COM</span><span class="c R" style="left:1179px;width:65px">-</span><span class="c L n" style="left:1414px;width:40px">11:43</span><span class="c R n" style="left:1454px;width:25px">40</span></div>
<div class="row drow" style="top:278px;left:219px;width:1544px"><span class="c R n" style="left:0px;width:29px">0</span><span class="c R n" style="left:29px;width:40px">0</span><span class="c L" style="left:69px;width:45px">OW</span><span class="c L" style="left:114px;width:45px">LHR</span><span class="c L" style="left:159px;width:45px">MCO</span><span class="c L" style="left:204px;width:35px">Tue</span><span class="c L d" style="left:239px;width:65px">07/03/2023</span><span class="c L n" style="left:304px;width:40px">13:25</span><span class="c L" style="left:344px;width:35px">Tue</span><span class="c R n" style="left:489px;width:65px">550.00</span><span class="c R n" style="left:554px;width:65px">440.00</span><span class="c R n" style="left:619px;width:65px">990.00</span><span class="c R n" style="left:684px;width:65px">1,980.00</span><span class="c L d" style="left:749px;width:65px">23/07/2021</span><span class="c L" style="left:814px;width:85px">British Airways</span><span class="c L" style="left:899px;width:45px">Y</span><span class="c L" style="left:944px;width:45px">?</span><span class="c L" style="left:989px;width:85px">Advanced Req</span><span class="c R n" style="left:1074px;width:65px">550.00</span><span class="c L" style="left:1139px;width:40px">COM</span><span class="c R n" style="left:1179px;width:65px">440.00</span><span class="c L n" style="left:1414px;width:40px">11:43</span><span class="c R n" style="left:1454px;width:25px">45</span></div>
<div class="row drow" style="top:293px;left:219px;width:1544px"><span class="c R n" style="left:0px;width:29px">0</span><span class="c R n" style="left:29px;width:40px">0</span><span class="c L" style="left:69px;width:45px">OW</span><span class="c L" style="left:114px;width:45px">LHR</span><span class="c L" style="left:159px;width:45px">MCO</span><span class="c L" style="left:204px;width:35px">Wed</span><span class="c L d" style="left:239px;width:65px">08/03/2023</span><span class="c L n" style="left:304px;width:40px">13:25</span><span class="c L" style="left:344px;width:35px">Wed</span><span class="c R n" style="left:489px;width:65px">550.00</span><span class="c R n" style="left:554px;width:65px">440.00</span><span class="c R n" style="left:619px;width:65px">990.00</span><span class="c R n" style="left:684px;width:65px">1,980.00</span><span class="c L d" style="left:749px;width:65px">23/07/2021</span><span class="c L" style="left:814px;width:85px">British Airways</span><span class="c L" style="left:899px;width:45px">Y</span><span class="c L" style="left:944px;width:45px">?</span><span class="c L" style="left:989px;width:85px">Advanced Req</span><span class="c R n" style="left:1074px;width:65px">550.00</span><span class="c L" style="left:1139px;width:40px">COM</span><span class="c R n" style="left:1179px;width:65px">440.00</span><span class="c L n" style="left:1414px;width:40px">11:43</span><span class="c R n" style="left:1454px;width:25px">20</span></div>
<div class="row drow" style="top:308px;left:219px;width:1544px"><span class="c R n" style="left:0px;width:29px">0</span><span class="c R n" style="left:29px;width:40px">0</span><span class="c L" style="left:69px;width:45px">OW</span><span class="c L" style="left:114px;width:45px">LHR</span><span class="c L" style="left:159px;width:45px">MCO</span><span class="c L" style="left:204px;width:35px">Mon</span><span class="c L d" style="left:239px;width:65px">06/03/2023</span><span class="c L n" style="left:304px;width:40px">13:00</span><span class="c L" style="left:344px;width:35px">Mon</span><span class="c R" style="left:489px;width:65px">-</span><span class="c R" style="left:554px;width:65px">-</span><span class="c R n" style="left:619px;width:65px">1,080.00</span><span class="c R n" style="left:684px;width:65px">2,070.00</span><span class="c L d" style="left:749px;width:65px">23/07/2021</span><span class="c L" style="left:814px;width:85px">Virgin Atlanti...</span><span class="c L" style="left:899px;width:45px">Y</span><span class="c L" style="left:944px;width:45px">?</span><span class="c L" style="left:989px;width:85px">Advanced Req</span><span class="c R" style="left:1074px;width:65px">-</span><span class="c L" style="left:1139px;width:40px">COM</span><span class="c R" style="left:1179px;width:65px">-</span><span class="c L n" style="left:1414px;width:40px">11:43</span><span class="c R n" style="left:1454px;width:25px">43</span></div>
<div class="row drow" style="top:323px;left:219px;width:1544px"><span class="c R n" style="left:0px;width:29px">0</span><span class="c R n" style="left:29px;width:40px">0</span><span class="c L" style="left:69px;width:45px">OW</span><span class="c L" style="left:114px;width:45px">LHR</span><span class="c L" style="left:159px;width:45px">MCO</span><span class="c L" style="left:204px;width:35px">Tue</span><span class="c L d" style="left:239px;width:65px">07/03/2023</span><span class="c L n" style="left:304px;width:40px">13:00</span><span class="c L" style="left:344px;width:35px">Tue</span><span class="c R" style="left:489px;width:65px">-</span><span class="c R" style="left:554px;width:65px">-</span><span class="c R n" style="left:619px;width:65px">1,080.00</span><span class="c R n" style="left:684px;width:65px">2,070.00</span><span class="c L d" style="left:749px;width:65px">23/07/2021</span><span class="c L" style="left:814px;width:85px">Virgin Atlanti...</span><span class="c L" style="left:899px;width:45px">Y</span><span class="c L" style="left:944px;width:45px">?</span><span class="c L" style="left:989px;width:85px">Advanced Req</span><span class="c R" style="left:1074px;width:65px">-</span><span class="c L" style="left:1139px;width:40px">COM</span><span class="c R" style="left:1179px;width:65px">-</span><span class="c L n" style="left:1414px;width:40px">11:43</span><span class="c R n" style="left:1454px;width:25px">45</span></div>
<div class="row drow" style="top:338px;left:219px;width:1544px"><span class="c R n" style="left:0px;width:29px">0</span><span class="c R n" style="left:29px;width:40px">0</span><span class="c L" style="left:69px;width:45px">OW</span><span class="c L" style="left:114px;width:45px">LHR</span><span class="c L" style="left:159px;width:45px">MCO</span><span class="c L" style="left:204px;width:35px">Wed</span><span class="c L d" style="left:239px;width:65px">08/03/2023</span><span class="c L n" style="left:304px;width:40px">13:00</span><span class="c L" style="left:344px;width:35px">Wed</span><span class="c R" style="left:489px;width:65px">-</span><span class="c R" style="left:554px;width:65px">-</span><span class="c R n" style="left:619px;width:65px">1,080.00</span><span class="c R n" style="left:684px;width:65px">2,070.00</span><span class="c L d" style="left:749px;width:65px">23/07/2021</span><span class="c L" style="left:814px;width:85px">Virgin Atlanti...</span><span class="c L" style="left:899px;width:45px">Y</span><span class="c L" style="left:944px;width:45px">?</span><span class="c L" style="left:989px;width:85px">Advanced Req</span><span class="c R" style="left:1074px;width:65px">-</span><span class="c L" style="left:1139px;width:40px">COM</span><span class="c R" style="left:1179px;width:65px">-</span><span class="c L n" style="left:1414px;width:40px">11:43</span><span class="c R n" style="left:1454px;width:25px">40</span></div>
<div class="row drow" style="top:353px;left:219px;width:1544px"><span class="c R n" style="left:0px;width:29px">0</span><span class="c R n" style="left:29px;width:40px">0</span><span class="c L" style="left:69px;width:45px">OW</span><span class="c L" style="left:114px;width:45px">LHR</span><span class="c L" style="left:159px;width:45px">MCO</span><span class="c L" style="left:204px;width:35px">Thu</span><span class="c L d" style="left:239px;width:65px">09/03/2023</span><span class="c L n" style="left:304px;width:40px">13:00</span><span class="c L" style="left:344px;width:35px">Thu</span><span class="c R" style="left:489px;width:65px">-</span><span class="c R" style="left:554px;width:65px">-</span><span class="c R n" style="left:619px;width:65px">1,080.00</span><span class="c R n" style="left:684px;width:65px">2,070.00</span><span class="c L d" style="left:749px;width:65px">23/07/2021</span><span class="c L" style="left:814px;width:85px">Virgin Atlanti...</span><span class="c L" style="left:899px;width:45px">Y</span><span class="c L" style="left:944px;width:45px">?</span><span class="c L" style="left:989px;width:85px">Advanced Req</span><span class="c R" style="left:1074px;width:65px">-</span><span class="c L" style="left:1139px;width:40px">COM</span><span class="c R" style="left:1179px;width:65px">-</span><span class="c L n" style="left:1414px;width:40px">11:43</span><span class="c R n" style="left:1454px;width:25px">45</span></div>
<div class="row drow" style="top:368px;left:219px;width:1544px"><span class="c R n" style="left:0px;width:29px">0</span><span class="c R n" style="left:29px;width:40px">0</span><span class="c L" style="left:69px;width:45px">OW</span><span class="c L" style="left:114px;width:45px">LHR</span><span class="c L" style="left:159px;width:45px">MCO</span><span class="c L" style="left:204px;width:35px">Fri</span><span class="c L d" style="left:239px;width:65px">03/03/2023</span><span class="c L n" style="left:304px;width:40px">13:25</span><span class="c L" style="left:344px;width:35px">Fri</span><span class="c R n" style="left:489px;width:65px">580.00</span><span class="c R n" style="left:554px;width:65px">464.00</span><span class="c R n" style="left:619px;width:65px">1,098.00</span><span class="c R n" style="left:684px;width:65px">2,088.00</span><span class="c L d" style="left:749px;width:65px">23/07/2021</span><span class="c L" style="left:814px;width:85px">British Airways</span><span class="c L" style="left:899px;width:45px">Y</span><span class="c L" style="left:944px;width:45px">?</span><span class="c L" style="left:989px;width:85px">Advanced Req</span><span class="c R n" style="left:1074px;width:65px">580.00</span><span class="c L" style="left:1139px;width:40px">COM</span><span class="c R n" style="left:1179px;width:65px">464.00</span><span class="c L n" style="left:1414px;width:40px">11:43</span><span class="c R n" style="left:1454px;width:25px">45</span></div>
<div class="row drow" style="top:383px;left:219px;width:1544px"><span class="c R n" style="left:0px;width:29px">0</span><span class="c R n" style="left:29px;width:40px">0</span><span class="c L" style="left:69px;width:45px">OW</span><span class="c L" style="left:114px;width:45px">LHR</span><span class="c L" style="left:159px;width:45px">MCO</span><span class="c L" style="left:204px;width:35px">Sat</span><span class="c L d" style="left:239px;width:65px">04/03/2023</span><span class="c L n" style="left:304px;width:40px">13:25</span><span class="c L" style="left:344px;width:35px">Sat</span><span class="c R n" style="left:489px;width:65px">580.00</span><span class="c R n" style="left:554px;width:65px">464.00</span><span class="c R n" style="left:619px;width:65px">1,098.00</span><span class="c R n" style="left:684px;width:65px">2,088.00</span><span class="c L d" style="left:749px;width:65px">23/07/2021</span><span class="c L" style="left:814px;width:85px">British Airways</span><span class="c L" style="left:899px;width:45px">Y</span><span class="c L" style="left:944px;width:45px">?</span><span class="c L" style="left:989px;width:85px">Advanced Req</span><span class="c R n" style="left:1074px;width:65px">580.00</span><span class="c L" style="left:1139px;width:40px">COM</span><span class="c R n" style="left:1179px;width:65px">464.00</span><span class="c L n" style="left:1414px;width:40px">11:43</span><span class="c R n" style="left:1454px;width:25px">45</span></div>
<div class="row drow" style="top:398px;left:219px;width:1544px"><span class="c R n" style="left:0px;width:29px">0</span><span class="c R n" style="left:29px;width:40px">0</span><span class="c L" style="left:69px;width:45px">OW</span><span class="c L" style="left:114px;width:45px">LHR</span><span class="c L" style="left:159px;width:45px">MCO</span><span class="c L" style="left:204px;width:35px">Sun</span><span class="c L d" style="left:239px;width:65px">05/03/2023</span><span class="c L n" style="left:304px;width:40px">13:25</span><span class="c L" style="left:344px;width:35px">Sun</span><span class="c R n" style="left:489px;width:65px">580.00</span><span class="c R n" style="left:554px;width:65px">464.00</span><span class="c R n" style="left:619px;width:65px">1,098.00</span><span class="c R n" style="left:684px;width:65px">2,088.00</span><span class="c L d" style="left:749px;width:65px">23/07/2021</span><span class="c L" style="left:814px;width:85px">British Airways</span><span class="c L" style="left:899px;width:45px">Y</span><span class="c L" style="left:944px;width:45px">?</span><span class="c L" style="left:989px;width:85px">Advanced Req</span><span class="c R n" style="left:1074px;width:65px">580.00</span><span class="c L" style="left:1139px;width:40px">COM</span><span class="c R n" style="left:1179px;width:65px">464.00</span><span class="c L n" style="left:1414px;width:40px">11:43</span><span class="c R n" style="left:1454px;width:25px">45</span></div>
<div class="row drow" style="top:413px;left:219px;width:1544px"><span class="c R n" style="left:0px;width:29px">0</span><span class="c R n" style="left:29px;width:40px">0</span><span class="c L" style="left:69px;width:45px">OW</span><span class="c L" style="left:114px;width:45px">LHR</span><span class="c L" style="left:159px;width:45px">MCO</span><span class="c L" style="left:204px;width:35px">Thu</span><span class="c L d" style="left:239px;width:65px">09/03/2023</span><span class="c L n" style="left:304px;width:40px">13:25</span><span class="c L" style="left:344px;width:35px">Thu</span><span class="c R n" style="left:489px;width:65px">580.00</span><span class="c R n" style="left:554px;width:65px">464.00</span><span class="c R n" style="left:619px;width:65px">1,098.00</span><span class="c R n" style="left:684px;width:65px">2,088.00</span><span class="c L d" style="left:749px;width:65px">23/07/2021</span><span class="c L" style="left:814px;width:85px">British Airways</span><span class="c L" style="left:899px;width:45px">Y</span><span class="c L" style="left:944px;width:45px">?</span><span class="c L" style="left:989px;width:85px">Advanced Req</span><span class="c R n" style="left:1074px;width:65px">580.00</span><span class="c L" style="left:1139px;width:40px">COM</span><span class="c R n" style="left:1179px;width:65px">464.00</span><span class="c L n" style="left:1414px;width:40px">11:43</span><span class="c R n" style="left:1454px;width:25px">39</span></div>
<div class="row drow" style="top:428px;left:219px;width:1544px"><span class="c R n" style="left:0px;width:29px">0</span><span class="c R n" style="left:29px;width:40px">0</span><span class="c L" style="left:69px;width:45px">OW</span><span class="c L" style="left:114px;width:45px">LHR</span><span class="c L" style="left:159px;width:45px">MCO</span><span class="c L" style="left:204px;width:35px">Fri</span><span class="c L d" style="left:239px;width:65px">03/03/2023</span><span class="c L n" style="left:304px;width:40px">13:00</span><span class="c L" style="left:344px;width:35px">Fri</span><span class="c R" style="left:489px;width:65px">-</span><span class="c R" style="left:554px;width:65px">-</span><span class="c R n" style="left:619px;width:65px">1,188.00</span><span class="c R n" style="left:684px;width:65px">2,178.00</span><span class="c L d" style="left:749px;width:65px">23/07/2021</span><span class="c L" style="left:814px;width:85px">Virgin Atlanti...</span><span class="c L" style="left:899px;width:45px">Y</span><span class="c L" style="left:944px;width:45px">?</span><span class="c L" style="left:989px;width:85px">Advanced Req</span><span class="c R" style="left:1074px;width:65px">-</span><span class="c L" style="left:1139px;width:40px">COM</span><span class="c R" style="left:1179px;width:65px">-</span><span class="c L n" style="left:1414px;width:40px">11:43</span><span class="c R n" style="left:1454px;width:25px">43</span></div>
<div class="row drow" style="top:443px;left:219px;width:1544px"><span class="c R n" style="left:0px;width:29px">0</span><span class="c R n" style="left:29px;width:40px">0</span><span class="c L" style="left:69px;width:45px">OW</span><span class="c L" style="left:114px;width:45px">LHR</span><span class="c L" style="left:159px;width:45px">MCO</span><span class="c L" style="left:204px;width:35px">Sat</span><span class="c L d" style="left:239px;width:65px">04/03/2023</span><span class="c L n" style="left:304px;width:40px">13:00</span><span class="c L" style="left:344px;width:35px">Sat</span><span class="c R" style="left:489px;width:65px">-</span><span class="c R" style="left:554px;width:65px">-</span><span class="c R n" style="left:619px;width:65px">1,188.00</span><span class="c R n" style="left:684px;width:65px">2,178.00</span><span class="c L d" style="left:749px;width:65px">23/07/2021</span><span class="c L" style="left:814px;width:85px">Virgin Atlanti...</span><span class="c L" style="left:899px;width:45px">Y</span><span class="c L" style="left:944px;width:45px">?</span><span class="c L" style="left:989px;width:85px">Advanced Req</span><span class="c R" style="left:1074px;width:65px">-</span><span class="c L" style="left:1139px;width:40px">COM</span><span class="c R" style="left:1179px;width:65px">-</span><span class="c L n" style="left:1414px;width:40px">11:43</span><span class="c R n" style="left:1454px;width:25px">45</span></div>
<div class="row drow" style="top:458px;left:219px;width:1544px"><span class="c R n" style="left:0px;width:29px">0</span><span class="c R n" style="left:29px;width:40px">0</span><span class="c L" style="left:69px;width:45px">OW</span><span class="c L" style="left:114px;width:45px">LHR</span><span class="c L" style="left:159px;width:45px">MCO</span><span class="c L" style="left:204px;width:35px">Sun</span><span class="c L d" style="left:239px;width:65px">05/03/2023</span><span class="c L n" style="left:304px;width:40px">13:00</span><span class="c L" style="left:344px;width:35px">Sun</span><span class="c R" style="left:489px;width:65px">-</span><span class="c R" style="left:554px;width:65px">-</span><span class="c R n" style="left:619px;width:65px">1,188.00</span><span class="c R n" style="left:684px;width:65px">2,178.00</span><span class="c L d" style="left:749px;width:65px">23/07/2021</span><span class="c L" style="left:814px;width:85px">Virgin Atlanti...</span><span class="c L" style="left:899px;width:45px">Y</span><span class="c L" style="left:944px;width:45px">?</span><span class="c L" style="left:989px;width:85px">Advanced Req</span><span class="c R" style="left:1074px;width:65px">-</span><span class="c L" style="left:1139px;width:40px">COM</span><span class="c R" style="left:1179px;width:65px">-</span><span class="c L n" style="left:1414px;width:40px">11:43</span><span class="c R n" style="left:1454px;width:25px">42</span></div>
<div class="vg" style="top:144px;left:248px;height:329px"></div>
<div class="vg" style="top:144px;left:288px;height:329px"></div>
<div class="vg" style="top:144px;left:333px;height:329px"></div>
<div class="vg" style="top:144px;left:378px;height:329px"></div>
<div class="vg" style="top:144px;left:423px;height:329px"></div>
<div class="vg" style="top:144px;left:458px;height:329px"></div>
<div class="vg" style="top:144px;left:523px;height:329px"></div>
<div class="vg" style="top:144px;left:563px;height:329px"></div>
<div class="vg" style="top:144px;left:598px;height:329px"></div>
<div class="vg" style="top:144px;left:668px;height:329px"></div>
<div class="vg" style="top:144px;left:708px;height:329px"></div>
<div class="vg" style="top:144px;left:773px;height:329px"></div>
<div class="vg" style="top:144px;left:838px;height:329px"></div>
<div class="vg" style="top:144px;left:903px;height:329px"></div>
<div class="vg" style="top:144px;left:968px;height:329px"></div>
<div class="vg" style="top:144px;left:1033px;height:329px"></div>
<div class="vg" style="top:144px;left:1118px;height:329px"></div>
<div class="vg" style="top:144px;left:1163px;height:329px"></div>
<div class="vg" style="top:144px;left:1208px;height:329px"></div>
<div class="vg" style="top:144px;left:1293px;height:329px"></div>
<div class="vg" style="top:144px;left:1358px;height:329px"></div>
<div class="vg" style="top:144px;left:1398px;height:329px"></div>
<div class="vg" style="top:144px;left:1463px;height:329px"></div>
<div class="vg" style="top:144px;left:1523px;height:329px"></div>
<div class="vg" style="top:144px;left:1633px;height:329px"></div>
<div class="vg" style="top:144px;left:1673px;height:329px"></div>
<div class="vg" style="top:144px;left:1698px;height:329px"></div>
<div class="vg" style="top:144px;left:1763px;height:329px"></div>
<div class="row sel1" style="top:264px;left:219px;width:1688px"><span class="c R n" style="left:0px;width:29px">0</span><span class="c R n" style="left:29px;width:40px">0</span><span class="c L" style="left:69px;width:45px">OW</span><span class="c L" style="left:114px;width:45px">LHR</span><span class="c L" style="left:159px;width:45px">MCO</span><span class="c L" style="left:204px;width:35px">Mon</span><span class="c L d" style="left:239px;width:65px">06/03/2023</span><span class="c L n" style="left:304px;width:40px">13:25</span><span class="c L" style="left:344px;width:35px">Mon</span><span class="c R n" style="left:489px;width:65px">550.00</span><span class="c R n" style="left:554px;width:65px">440.00</span><span class="c R n" style="left:619px;width:65px">990.00</span><span class="c R n" style="left:684px;width:65px">1,980.00</span><span class="c L d" style="left:749px;width:65px">23/07/2021</span><span class="c L" style="left:814px;width:85px">British Airways</span><span class="c L" style="left:899px;width:45px">Y</span><span class="c L" style="left:944px;width:45px">?</span><span class="c L" style="left:989px;width:85px">Advanced Req</span><span class="c R n" style="left:1074px;width:65px">550.00</span><span class="c L" style="left:1139px;width:40px">COM</span><span class="c R n" style="left:1179px;width:65px">440.00</span><span class="c L n" style="left:1414px;width:40px">11:43</span><span class="c R n" style="left:1454px;width:25px">45</span></div>

<div class="txt b" style="left:216px;top:506px;font-size:11.7px">Return flights and MCO-&gt;LGW Oneways Search results: 21/21</div>
<div class="a" style="left:216px;top:524px;width:1694px;height:2px;background:linear-gradient(to right,#a2b7ce,#bccadb 50%,#eceff2)"></div>
<div class="a" style="left:216px;top:529px;width:1694px;height:380px;background:#fff;border:1px solid #a0a0a0;box-sizing:border-box"></div>
<div class="hdr" style="top:533px;left:219px;width:1688px"></div>
<div class="hc R" style="top:533px;left:220px;width:28px;">N</div>
<div class="hs" style="top:532px;left:248px;height:17px"></div>
<div class="hc R" style="top:533px;left:249px;width:39px;">STP1</div>
<div class="hs" style="top:532px;left:288px;height:17px"></div>
<div class="hc R" style="top:533px;left:289px;width:39px;">STP2</div>
<div class="hs" style="top:532px;left:328px;height:17px"></div>
<div class="hc L" style="top:533px;left:329px;width:44px;">Flt Ty...</div>
<div class="hs" style="top:532px;left:373px;height:17px"></div>
<div class="hc L" style="top:533px;left:374px;width:44px;">Dep</div>
<div class="hs" style="top:532px;left:418px;height:17px"></div>
<div class="hc L" style="top:533px;left:419px;width:44px;">Arv</div>
<div class="hs" style="top:532px;left:463px;height:17px"></div>
<div class="hc L" style="top:533px;left:464px;width:34px;">DOW</div>
<div class="hs" style="top:532px;left:498px;height:17px"></div>
<div class="hc L" style="top:533px;left:499px;width:64px;">OB Dep ...</div>
<div class="hs" style="top:532px;left:563px;height:17px"></div>
<div class="hc L" style="top:533px;left:564px;width:39px;">Time</div>
<div class="hs" style="top:532px;left:603px;height:17px"></div>
<div class="hc L" style="top:533px;left:604px;width:34px;">DOW</div>
<div class="hs" style="top:532px;left:638px;height:17px"></div>
<div class="hc L" style="top:533px;left:639px;width:69px;">IB Dep Date</div>
<div class="hs" style="top:532px;left:708px;height:17px"></div>
<div class="hc L" style="top:533px;left:709px;width:39px;">Time</div>
<div class="hs" style="top:532px;left:748px;height:17px"></div>
<div class="hc R" style="top:533px;left:749px;width:64px;">AdAC</div>
<div class="hs" style="top:532px;left:813px;height:17px"></div>
<div class="hc R" style="top:533px;left:814px;width:64px;">ChAC</div>
<div class="hs" style="top:532px;left:878px;height:17px"></div>
<div class="hc R" style="top:533px;left:879px;width:64px;">Price</div>
<div class="hs" style="top:532px;left:943px;height:17px"></div>
<div class="hc R" style="top:533px;left:944px;width:64px;padding-right:9px;">Basket<i class="sort"></i></div>
<div class="hs" style="top:532px;left:1008px;height:17px"></div>
<div class="hc L" style="top:533px;left:1009px;width:64px;">Updated</div>
<div class="hs" style="top:532px;left:1073px;height:17px"></div>
<div class="hc L" style="top:533px;left:1074px;width:84px;">Carrier</div>
<div class="hs" style="top:532px;left:1158px;height:17px"></div>
<div class="hc L" style="top:533px;left:1159px;width:44px;">Cabin</div>
<div class="hs" style="top:532px;left:1203px;height:17px"></div>
<div class="hc L" style="top:533px;left:1204px;width:44px;">B.C.</div>
<div class="hs" style="top:532px;left:1248px;height:17px"></div>
<div class="hc L" style="top:533px;left:1249px;width:84px;">Supplier</div>
<div class="hs" style="top:532px;left:1333px;height:17px"></div>
<div class="hc R" style="top:533px;left:1334px;width:64px;">AdPP</div>
<div class="hs" style="top:532px;left:1398px;height:17px"></div>
<div class="hc L" style="top:533px;left:1399px;width:39px;">Type</div>
<div class="hs" style="top:532px;left:1438px;height:17px"></div>
<div class="hc R" style="top:533px;left:1439px;width:64px;">ChPP</div>
<div class="hs" style="top:532px;left:1503px;height:17px"></div>
<div class="hc R" style="top:533px;left:1504px;width:59px;">Priority</div>
<div class="hs" style="top:532px;left:1563px;height:17px"></div>
<div class="hc L" style="top:533px;left:1564px;width:109px;">Priority description</div>
<div class="hs" style="top:532px;left:1673px;height:17px"></div>
<div class="hc L" style="top:533px;left:1674px;width:39px;">Time</div>
<div class="hs" style="top:532px;left:1713px;height:17px"></div>
<div class="hc R" style="top:533px;left:1714px;width:24px;">S</div>
<div class="hs" style="top:532px;left:1738px;height:17px"></div>
<div class="hc L" style="top:533px;left:1739px;width:64px;">Fare</div>
<div class="hs" style="top:532px;left:1803px;height:17px"></div>
<div class="hg" style="top:564px;left:219px;width:1688px"></div>
<div class="hg" style="top:579px;left:219px;width:1688px"></div>
<div class="hg" style="top:594px;left:219px;width:1688px"></div>
<div class="hg" style="top:609px;left:219px;width:1688px"></div>
<div class="hg" style="top:624px;left:219px;width:1688px"></div>
<div class="hg" style="top:639px;left:219px;width:1688px"></div>
<div class="hg" style="top:654px;left:219px;width:1688px"></div>
<div class="hg" style="top:669px;left:219px;width:1688px"></div>
<div class="hg" style="top:684px;left:219px;width:1688px"></div>
<div class="hg" style="top:699px;left:219px;width:1688px"></div>
<div class="hg" style="top:714px;left:219px;width:1688px"></div>
<div class="hg" style="top:729px;left:219px;width:1688px"></div>
<div class="hg" style="top:744px;left:219px;width:1688px"></div>
<div class="hg" style="top:759px;left:219px;width:1688px"></div>
<div class="hg" style="top:774px;left:219px;width:1688px"></div>
<div class="hg" style="top:789px;left:219px;width:1688px"></div>
<div class="hg" style="top:804px;left:219px;width:1688px"></div>
<div class="hg" style="top:819px;left:219px;width:1688px"></div>
<div class="hg" style="top:834px;left:219px;width:1688px"></div>
<div class="hg" style="top:849px;left:219px;width:1688px"></div>
<div class="hg" style="top:864px;left:219px;width:1688px"></div>
<div class="hg" style="top:879px;left:219px;width:1688px"></div>
<div class="row frow" style="top:550px;left:219px;width:1584px"><span class="c R" style="left:0px;width:29px">-</span><span class="c R" style="left:29px;width:40px">-</span><span class="c R" style="left:69px;width:40px">-</span><span class="c L" style="left:109px;width:45px">-</span><span class="c L" style="left:154px;width:45px">-</span><span class="c L" style="left:199px;width:45px">-</span><span class="c L" style="left:279px;width:65px">-</span><span class="c L" style="left:419px;width:70px">-</span><span class="c L" style="left:489px;width:40px">-</span><span class="c R" style="left:529px;width:65px">-</span><span class="c R" style="left:594px;width:65px">-</span><span class="c R" style="left:659px;width:65px">-</span><span class="c R" style="left:724px;width:65px">-</span><span class="c L" style="left:789px;width:65px">-</span><span class="c L" style="left:939px;width:45px">-</span><span class="c L" style="left:984px;width:45px">-</span><span class="c R" style="left:1114px;width:65px">-</span><span class="c L" style="left:1179px;width:40px">-</span><span class="c R" style="left:1219px;width:65px">-</span><span class="c R" style="left:1284px;width:60px">-</span><span class="c L" style="left:1344px;width:110px">-</span><span class="c L" style="left:1454px;width:40px">-</span><span class="c R" style="left:1494px;width:25px">-</span><span class="c L" style="left:1519px;width:65px">-</span></div>
<div class="row drow" style="top:564px;left:219px;width:1584px"><span class="c R n" style="left:0px;width:29px">0</span><span class="c R n" style="left:29px;width:40px">0</span><span class="c R n" style="left:69px;width:40px">1</span><span class="c L" style="left:109px;width:45px">OW</span><span class="c L" style="left:154px;width:45px">MCO|1</span><span class="c L" style="left:199px;width:45px">LHR|1</span><span class="c L" style="left:244px;width:35px">Mon</span><span class="c L d" style="left:279px;width:65px">20/03/2023</span><span class="c L n" style="left:344px;width:40px">13:40</span><span class="c L" style="left:384px;width:35px">Tue</span><span class="c R" style="left:529px;width:65px">-</span><span class="c R" style="left:594px;width:65px">-</span><span class="c R n" style="left:659px;width:65px">900.00</span><span class="c R n" style="left:724px;width:65px">1,890.00</span><span class="c L d" style="left:789px;width:65px">23/07/2021</span><span class="c L" style="left:854px;width:85px">United Airlines</span><span class="c L" style="left:939px;width:45px">Y</span><span class="c L" style="left:984px;width:45px">??</span><span class="c L" style="left:1029px;width:85px">Advanced Req</span><span class="c R" style="left:1114px;width:65px">-</span><span class="c L" style="left:1179px;width:40px">COM</span><span class="c R" style="left:1219px;width:65px">-</span><span class="c L n" style="left:1454px;width:40px">11:43</span><span class="c R n" style="left:1494px;width:25px">40</span></div>
<div class="row drow" style="top:579px;left:219px;width:1584px"><span class="c R n" style="left:0px;width:29px">0</span><span class="c R n" style="left:29px;width:40px">0</span><span class="c R n" style="left:69px;width:40px">1</span><span class="c L" style="left:109px;width:45px">OW</span><span class="c L" style="left:154px;width:45px">MCO|1</span><span class="c L" style="left:199px;width:45px">LHR|1</span><span class="c L" style="left:244px;width:35px">Tue</span><span class="c L d" style="left:279px;width:65px">21/03/2023</span><span class="c L n" style="left:344px;width:40px">13:40</span><span class="c L" style="left:384px;width:35px">Wed</span><span class="c R" style="left:529px;width:65px">-</span><span class="c R" style="left:594px;width:65px">-</span><span class="c R n" style="left:659px;width:65px">900.00</span><span class="c R n" style="left:724px;width:65px">1,890.00</span><span class="c L d" style="left:789px;width:65px">23/07/2021</span><span class="c L" style="left:854px;width:85px">United Airlines</span><span class="c L" style="left:939px;width:45px">Y</span><span class="c L" style="left:984px;width:45px">??</span><span class="c L" style="left:1029px;width:85px">Advanced Req</span><span class="c R" style="left:1114px;width:65px">-</span><span class="c L" style="left:1179px;width:40px">COM</span><span class="c R" style="left:1219px;width:65px">-</span><span class="c L n" style="left:1454px;width:40px">11:43</span><span class="c R n" style="left:1494px;width:25px">40</span></div>
<div class="row drow" style="top:594px;left:219px;width:1584px"><span class="c R n" style="left:0px;width:29px">0</span><span class="c R n" style="left:29px;width:40px">0</span><span class="c R n" style="left:69px;width:40px">1</span><span class="c L" style="left:109px;width:45px">OW</span><span class="c L" style="left:154px;width:45px">MCO|1</span><span class="c L" style="left:199px;width:45px">LHR|1</span><span class="c L" style="left:244px;width:35px">Wed</span><span class="c L d" style="left:279px;width:65px">22/03/2023</span><span class="c L n" style="left:344px;width:40px">13:40</span><span class="c L" style="left:384px;width:35px">Thu</span><span class="c R" style="left:529px;width:65px">-</span><span class="c R" style="left:594px;width:65px">-</span><span class="c R n" style="left:659px;width:65px">900.00</span><span class="c R n" style="left:724px;width:65px">1,890.00</span><span class="c L d" style="left:789px;width:65px">23/07/2021</span><span class="c L" style="left:854px;width:85px">United Airlines</span><span class="c L" style="left:939px;width:45px">Y</span><span class="c L" style="left:984px;width:45px">??</span><span class="c L" style="left:1029px;width:85px">Advanced Req</span><span class="c R" style="left:1114px;width:65px">-</span><span class="c L" style="left:1179px;width:40px">COM</span><span class="c R" style="left:1219px;width:65px">-</span><span class="c L n" style="left:1454px;width:40px">11:43</span><span class="c R n" style="left:1494px;width:25px">40</span></div>
<div class="row drow" style="top:609px;left:219px;width:1584px"><span class="c R n" style="left:0px;width:29px">0</span><span class="c R n" style="left:29px;width:40px">0</span><span class="c R n" style="left:69px;width:40px">1</span><span class="c L" style="left:109px;width:45px">OW</span><span class="c L" style="left:154px;width:45px">MCO|1</span><span class="c L" style="left:199px;width:45px">LHR|1</span><span class="c L" style="left:244px;width:35px">Thu</span><span class="c L d" style="left:279px;width:65px">23/03/2023</span><span class="c L n" style="left:344px;width:40px">13:40</span><span class="c L" style="left:384px;width:35px">Fri</span><span class="c R" style="left:529px;width:65px">-</span><span class="c R" style="left:594px;width:65px">-</span><span class="c R n" style="left:659px;width:65px">900.00</span><span class="c R n" style="left:724px;width:65px">1,890.00</span><span class="c L d" style="left:789px;width:65px">23/07/2021</span><span class="c L" style="left:854px;width:85px">United Airlines</span><span class="c L" style="left:939px;width:45px">Y</span><span class="c L" style="left:984px;width:45px">??</span><span class="c L" style="left:1029px;width:85px">Advanced Req</span><span class="c R" style="left:1114px;width:65px">-</span><span class="c L" style="left:1179px;width:40px">COM</span><span class="c R" style="left:1219px;width:65px">-</span><span class="c L n" style="left:1454px;width:40px">11:43</span><span class="c R n" style="left:1494px;width:25px">40</span></div>
<div class="row drow" style="top:639px;left:219px;width:1584px"><span class="c R n" style="left:0px;width:29px">0</span><span class="c R n" style="left:29px;width:40px">0</span><span class="c R n" style="left:69px;width:40px">0</span><span class="c L" style="left:109px;width:45px">OW</span><span class="c L" style="left:154px;width:45px">MCO</span><span class="c L" style="left:199px;width:45px">LHR</span><span class="c L" style="left:244px;width:35px">Tue</span><span class="c L d" style="left:279px;width:65px">21/03/2023</span><span class="c L n" style="left:344px;width:40px">19:55</span><span class="c L" style="left:384px;width:35px">Wed</span><span class="c R n" style="left:529px;width:65px">550.00</span><span class="c R n" style="left:594px;width:65px">440.00</span><span class="c R n" style="left:659px;width:65px">990.00</span><span class="c R n" style="left:724px;width:65px">1,980.00</span><span class="c L d" style="left:789px;width:65px">23/07/2021</span><span class="c L" style="left:854px;width:85px">British Airways</span><span class="c L" style="left:939px;width:45px">Y</span><span class="c L" style="left:984px;width:45px">?</span><span class="c L" style="left:1029px;width:85px">Advanced Req</span><span class="c R n" style="left:1114px;width:65px">550.00</span><span class="c L" style="left:1179px;width:40px">COM</span><span class="c R n" style="left:1219px;width:65px">440.00</span><span class="c L n" style="left:1454px;width:40px">11:43</span><span class="c R n" style="left:1494px;width:25px">45</span></div>
<div class="row drow" style="top:654px;left:219px;width:1584px"><span class="c R n" style="left:0px;width:29px">0</span><span class="c R n" style="left:29px;width:40px">0</span><span class="c R n" style="left:69px;width:40px">0</span><span class="c L" style="left:109px;width:45px">OW</span><span class="c L" style="left:154px;width:45px">MCO</span><span class="c L" style="left:199px;width:45px">LHR</span><span class="c L" style="left:244px;width:35px">Wed</span><span class="c L d" style="left:279px;width:65px">22/03/2023</span><span class="c L n" style="left:344px;width:40px">19:55</span><span class="c L" style="left:384px;width:35px">Thu</span><span class="c R n" style="left:529px;width:65px">550.00</span><span class="c R n" style="left:594px;width:65px">440.00</span><span class="c R n" style="left:659px;width:65px">990.00</span><span class="c R n" style="left:724px;width:65px">1,980.00</span><span class="c L d" style="left:789px;width:65px">23/07/2021</span><span class="c L" style="left:854px;width:85px">British Airways</span><span class="c L" style="left:939px;width:45px">Y</span><span class="c L" style="left:984px;width:45px">?</span><span class="c L" style="left:1029px;width:85px">Advanced Req</span><span class="c R n" style="left:1114px;width:65px">550.00</span><span class="c L" style="left:1179px;width:40px">COM</span><span class="c R n" style="left:1219px;width:65px">440.00</span><span class="c L n" style="left:1454px;width:40px">11:43</span><span class="c R n" style="left:1494px;width:25px">20</span></div>
<div class="row drow" style="top:669px;left:219px;width:1584px"><span class="c R n" style="left:0px;width:29px">0</span><span class="c R n" style="left:29px;width:40px">0</span><span class="c R n" style="left:69px;width:40px">0</span><span class="c L" style="left:109px;width:45px">OW</span><span class="c L" style="left:154px;width:45px">MCO</span><span class="c L" style="left:199px;width:45px">LHR</span><span class="c L" style="left:244px;width:35px">Thu</span><span class="c L d" style="left:279px;width:65px">23/03/2023</span><span class="c L n" style="left:344px;width:40px">19:55</span><span class="c L" style="left:384px;width:35px">Fri</span><span class="c R n" style="left:529px;width:65px">550.00</span><span class="c R n" style="left:594px;width:65px">440.00</span><span class="c R n" style="left:659px;width:65px">990.00</span><span class="c R n" style="left:724px;width:65px">1,980.00</span><span class="c L d" style="left:789px;width:65px">23/07/2021</span><span class="c L" style="left:854px;width:85px">British Airways</span><span class="c L" style="left:939px;width:45px">Y</span><span class="c L" style="left:984px;width:45px">?</span><span class="c L" style="left:1029px;width:85px">Advanced Req</span><span class="c R n" style="left:1114px;width:65px">550.00</span><span class="c L" style="left:1179px;width:40px">COM</span><span class="c R n" style="left:1219px;width:65px">440.00</span><span class="c L n" style="left:1454px;width:40px">11:43</span><span class="c R n" style="left:1494px;width:25px">39</span></div>
<div class="row drow" style="top:684px;left:219px;width:1584px"><span class="c R n" style="left:0px;width:29px">0</span><span class="c R n" style="left:29px;width:40px">0</span><span class="c R n" style="left:69px;width:40px">1</span><span class="c L" style="left:109px;width:45px">OW</span><span class="c L" style="left:154px;width:45px">MCO|1</span><span class="c L" style="left:199px;width:45px">LHR|1</span><span class="c L" style="left:244px;width:35px">Sat</span><span class="c L d" style="left:279px;width:65px">18/03/2023</span><span class="c L n" style="left:344px;width:40px">13:40</span><span class="c L" style="left:384px;width:35px">Sun</span><span class="c R" style="left:529px;width:65px">-</span><span class="c R" style="left:594px;width:65px">-</span><span class="c R n" style="left:659px;width:65px">1,008.00</span><span class="c R n" style="left:724px;width:65px">1,998.00</span><span class="c L d" style="left:789px;width:65px">23/07/2021</span><span class="c L" style="left:854px;width:85px">United Airlines</span><span class="c L" style="left:939px;width:45px">Y</span><span class="c L" style="left:984px;width:45px">??</span><span class="c L" style="left:1029px;width:85px">Advanced Req</span><span class="c R" style="left:1114px;width:65px">-</span><span class="c L" style="left:1179px;width:40px">COM</span><span class="c R" style="left:1219px;width:65px">-</span><span class="c L n" style="left:1454px;width:40px">11:43</span><span class="c R n" style="left:1494px;width:25px">40</span></div>
<div class="row drow" style="top:699px;left:219px;width:1584px"><span class="c R n" style="left:0px;width:29px">0</span><span class="c R n" style="left:29px;width:40px">0</span><span class="c R n" style="left:69px;width:40px">1</span><span class="c L" style="left:109px;width:45px">OW</span><span class="c L" style="left:154px;width:45px">MCO|1</span><span class="c L" style="left:199px;width:45px">LHR|1</span><span class="c L" style="left:244px;width:35px">Sun</span><span class="c L d" style="left:279px;width:65px">19/03/2023</span><span class="c L n" style="left:344px;width:40px">13:40</span><span class="c L" style="left:384px;width:35px">Mon</span><span class="c R" style="left:529px;width:65px">-</span><span class="c R" style="left:594px;width:65px">-</span><span class="c R n" style="left:659px;width:65px">1,008.00</span><span class="c R n" style="left:724px;width:65px">1,998.00</span><span class="c L d" style="left:789px;width:65px">23/07/2021</span><span class="c L" style="left:854px;width:85px">United Airlines</span><span class="c L" style="left:939px;width:45px">Y</span><span class="c L" style="left:984px;width:45px">??</span><span class="c L" style="left:1029px;width:85px">Advanced Req</span><span class="c R" style="left:1114px;width:65px">-</span><span class="c L" style="left:1179px;width:40px">COM</span><span class="c R" style="left:1219px;width:65px">-</span><span class="c L n" style="left:1454px;width:40px">11:43</span><span class="c R n" style="left:1494px;width:25px">40</span></div>
<div class="row drow" style="top:714px;left:219px;width:1584px"><span class="c R n" style="left:0px;width:29px">0</span><span class="c R n" style="left:29px;width:40px">0</span><span class="c R n" style="left:69px;width:40px">1</span><span class="c L" style="left:109px;width:45px">OW</span><span class="c L" style="left:154px;width:45px">MCO|1</span><span class="c L" style="left:199px;width:45px">LHR|1</span><span class="c L" style="left:244px;width:35px">Fri</span><span class="c L d" style="left:279px;width:65px">17/03/2023</span><span class="c L n" style="left:344px;width:40px">13:40</span><span class="c L" style="left:384px;width:35px">Sat</span><span class="c R" style="left:529px;width:65px">-</span><span class="c R" style="left:594px;width:65px">-</span><span class="c R n" style="left:659px;width:65px">1,008.00</span><span class="c R n" style="left:724px;width:65px">1,998.00</span><span class="c L d" style="left:789px;width:65px">23/07/2021</span><span class="c L" style="left:854px;width:85px">United Airlines</span><span class="c L" style="left:939px;width:45px">Y</span><span class="c L" style="left:984px;width:45px">??</span><span class="c L" style="left:1029px;width:85px">Advanced Req</span><span class="c R" style="left:1114px;width:65px">-</span><span class="c L" style="left:1179px;width:40px">COM</span><span class="c R" style="left:1219px;width:65px">-</span><span class="c L n" style="left:1454px;width:40px">11:43</span><span class="c R n" style="left:1494px;width:25px">40</span></div>
<div class="row drow" style="top:729px;left:219px;width:1584px"><span class="c R n" style="left:0px;width:29px">0</span><span class="c R n" style="left:29px;width:40px">0</span><span class="c R n" style="left:69px;width:40px">0</span><span class="c L" style="left:109px;width:45px">OW</span><span class="c L" style="left:154px;width:45px">MCO</span><span class="c L" style="left:199px;width:45px">LHR</span><span class="c L" style="left:244px;width:35px">Mon</span><span class="c L d" style="left:279px;width:65px">20/03/2023</span><span class="c L n" style="left:344px;width:40px">19:50</span><span class="c L" style="left:384px;width:35px">Tue</span><span class="c R" style="left:529px;width:65px">-</span><span class="c R" style="left:594px;width:65px">-</span><span class="c R n" style="left:659px;width:65px">1,080.00</span><span class="c R n" style="left:724px;width:65px">2,070.00</span><span class="c L d" style="left:789px;width:65px">23/07/2021</span><span class="c L" style="left:854px;width:85px">Virgin Atlanti...</span><span class="c L" style="left:939px;width:45px">Y</span><span class="c L" style="left:984px;width:45px">?</span><span class="c L" style="left:1029px;width:85px">Advanced Req</span><span class="c R" style="left:1114px;width:65px">-</span><span class="c L" style="left:1179px;width:40px">COM</span><span class="c R" style="left:1219px;width:65px">-</span><span class="c L n" style="left:1454px;width:40px">11:43</span><span class="c R n" style="left:1494px;width:25px">43</span></div>
<div class="row drow" style="top:744px;left:219px;width:1584px"><span class="c R n" style="left:0px;width:29px">0</span><span class="c R n" style="left:29px;width:40px">0</span><span class="c R n" style="left:69px;width:40px">0</span><span class="c L" style="left:109px;width:45px">OW</span><span class="c L" style="left:154px;width:45px">MCO</span><span class="c L" style="left:199px;width:45px">LHR</span><span class="c L" style="left:244px;width:35px">Tue</span><span class="c L d" style="left:279px;width:65px">21/03/2023</span><span class="c L n" style="left:344px;width:40px">19:50</span><span class="c L" style="left:384px;width:35px">Wed</span><span class="c R" style="left:529px;width:65px">-</span><span class="c R" style="left:594px;width:65px">-</span><span class="c R n" style="left:659px;width:65px">1,080.00</span><span class="c R n" style="left:724px;width:65px">2,070.00</span><span class="c L d" style="left:789px;width:65px">23/07/2021</span><span class="c L" style="left:854px;width:85px">Virgin Atlanti...</span><span class="c L" style="left:939px;width:45px">Y</span><span class="c L" style="left:984px;width:45px">?</span><span class="c L" style="left:1029px;width:85px">Advanced Req</span><span class="c R" style="left:1114px;width:65px">-</span><span class="c L" style="left:1179px;width:40px">COM</span><span class="c R" style="left:1219px;width:65px">-</span><span class="c L n" style="left:1454px;width:40px">11:43</span><span class="c R n" style="left:1494px;width:25px">45</span></div>
<div class="row drow" style="top:759px;left:219px;width:1584px"><span class="c R n" style="left:0px;width:29px">0</span><span class="c R n" style="left:29px;width:40px">0</span><span class="c R n" style="left:69px;width:40px">0</span><span class="c L" style="left:109px;width:45px">OW</span><span class="c L" style="left:154px;width:45px">MCO</span><span class="c L" style="left:199px;width:45px">LHR</span><span class="c L" style="left:244px;width:35px">Wed</span><span class="c L d" style="left:279px;width:65px">22/03/2023</span><span class="c L n" style="left:344px;width:40px">19:50</span><span class="c L" style="left:384px;width:35px">Thu</span><span class="c R" style="left:529px;width:65px">-</span><span class="c R" style="left:594px;width:65px">-</span><span class="c R n" style="left:659px;width:65px">1,080.00</span><span class="c R n" style="left:724px;width:65px">2,070.00</span><span class="c L d" style="left:789px;width:65px">23/07/2021</span><span class="c L" style="left:854px;width:85px">Virgin Atlanti...</span><span class="c L" style="left:939px;width:45px">Y</span><span class="c L" style="left:984px;width:45px">?</span><span class="c L" style="left:1029px;width:85px">Advanced Req</span><span class="c R" style="left:1114px;width:65px">-</span><span class="c L" style="left:1179px;width:40px">COM</span><span class="c R" style="left:1219px;width:65px">-</span><span class="c L n" style="left:1454px;width:40px">11:43</span><span class="c R n" style="left:1494px;width:25px">40</span></div>
<div class="row drow" style="top:774px;left:219px;width:1584px"><span class="c R n" style="left:0px;width:29px">0</span><span class="c R n" style="left:29px;width:40px">0</span><span class="c R n" style="left:69px;width:40px">0</span><span class="c L" style="left:109px;width:45px">OW</span><span class="c L" style="left:154px;width:45px">MCO</span><span class="c L" style="left:199px;width:45px">LHR</span><span class="c L" style="left:244px;width:35px">Thu</span><span class="c L d" style="left:279px;width:65px">23/03/2023</span><span class="c L n" style="left:344px;width:40px">19:50</span><span class="c L" style="left:384px;width:35px">Fri</span><span class="c R" style="left:529px;width:65px">-</span><span class="c R" style="left:594px;width:65px">-</span><span class="c R n" style="left:659px;width:65px">1,080.00</span><span class="c R n" style="left:724px;width:65px">2,070.00</span><span class="c L d" style="left:789px;width:65px">23/07/2021</span><span class="c L" style="left:854px;width:85px">Virgin Atlanti...</span><span class="c L" style="left:939px;width:45px">Y</span><span class="c L" style="left:984px;width:45px">?</span><span class="c L" style="left:1029px;width:85px">Advanced Req</span><span class="c R" style="left:1114px;width:65px">-</span><span class="c L" style="left:1179px;width:40px">COM</span><span class="c R" style="left:1219px;width:65px">-</span><span class="c L n" style="left:1454px;width:40px">11:43</span><span class="c R n" style="left:1494px;width:25px">45</span></div>
<div class="row drow" style="top:789px;left:219px;width:1584px"><span class="c R n" style="left:0px;width:29px">0</span><span class="c R n" style="left:29px;width:40px">0</span><span class="c R n" style="left:69px;width:40px">0</span><span class="c L" style="left:109px;width:45px">OW</span><span class="c L" style="left:154px;width:45px">MCO</span><span class="c L" style="left:199px;width:45px">LHR</span><span class="c L" style="left:244px;width:35px">Fri</span><span class="c L d" style="left:279px;width:65px">17/03/2023</span><span class="c L n" style="left:344px;width:40px">19:55</span><span class="c L" style="left:384px;width:35px">Sat</span><span class="c R n" style="left:529px;width:65px">580.00</span><span class="c R n" style="left:594px;width:65px">464.00</span><span class="c R n" style="left:659px;width:65px">1,098.00</span><span class="c R n" style="left:724px;width:65px">2,088.00</span><span class="c L d" style="left:789px;width:65px">23/07/2021</span><span class="c L" style="left:854px;width:85px">British Airways</span><span class="c L" style="left:939px;width:45px">Y</span><span class="c L" style="left:984px;width:45px">?</span><span class="c L" style="left:1029px;width:85px">Advanced Req</span><span class="c R n" style="left:1114px;width:65px">580.00</span><span class="c L" style="left:1179px;width:40px">COM</span><span class="c R n" style="left:1219px;width:65px">464.00</span><span class="c L n" style="left:1454px;width:40px">11:43</span><span class="c R n" style="left:1494px;width:25px">45</span></div>
<div class="row drow" style="top:804px;left:219px;width:1584px"><span class="c R n" style="left:0px;width:29px">0</span><span class="c R n" style="left:29px;width:40px">0</span><span class="c R n" style="left:69px;width:40px">0</span><span class="c L" style="left:109px;width:45px">OW</span><span class="c L" style="left:154px;width:45px">MCO</span><span class="c L" style="left:199px;width:45px">LHR</span><span class="c L" style="left:244px;width:35px">Sat</span><span class="c L d" style="left:279px;width:65px">18/03/2023</span><span class="c L n" style="left:344px;width:40px">19:55</span><span class="c L" style="left:384px;width:35px">Sun</span><span class="c R n" style="left:529px;width:65px">580.00</span><span class="c R n" style="left:594px;width:65px">464.00</span><span class="c R n" style="left:659px;width:65px">1,098.00</span><span class="c R n" style="left:724px;width:65px">2,088.00</span><span class="c L d" style="left:789px;width:65px">23/07/2021</span><span class="c L" style="left:854px;width:85px">British Airways</span><span class="c L" style="left:939px;width:45px">Y</span><span class="c L" style="left:984px;width:45px">?</span><span class="c L" style="left:1029px;width:85px">Advanced Req</span><span class="c R n" style="left:1114px;width:65px">580.00</span><span class="c L" style="left:1179px;width:40px">COM</span><span class="c R n" style="left:1219px;width:65px">464.00</span><span class="c L n" style="left:1454px;width:40px">11:43</span><span class="c R n" style="left:1494px;width:25px">45</span></div>
<div class="row drow" style="top:819px;left:219px;width:1584px"><span class="c R n" style="left:0px;width:29px">0</span><span class="c R n" style="left:29px;width:40px">0</span><span class="c R n" style="left:69px;width:40px">0</span><span class="c L" style="left:109px;width:45px">OW</span><span class="c L" style="left:154px;width:45px">MCO</span><span class="c L" style="left:199px;width:45px">LHR</span><span class="c L" style="left:244px;width:35px">Sun</span><span class="c L d" style="left:279px;width:65px">19/03/2023</span><span class="c L n" style="left:344px;width:40px">19:55</span><span class="c L" style="left:384px;width:35px">Mon</span><span class="c R n" style="left:529px;width:65px">580.00</span><span class="c R n" style="left:594px;width:65px">464.00</span><span class="c R n" style="left:659px;width:65px">1,098.00</span><span class="c R n" style="left:724px;width:65px">2,088.00</span><span class="c L d" style="left:789px;width:65px">23/07/2021</span><span class="c L" style="left:854px;width:85px">British Airways</span><span class="c L" style="left:939px;width:45px">Y</span><span class="c L" style="left:984px;width:45px">?</span><span class="c L" style="left:1029px;width:85px">Advanced Req</span><span class="c R n" style="left:1114px;width:65px">580.00</span><span class="c L" style="left:1179px;width:40px">COM</span><span class="c R n" style="left:1219px;width:65px">464.00</span><span class="c L n" style="left:1454px;width:40px">11:43</span><span class="c R n" style="left:1494px;width:25px">45</span></div>
<div class="row drow" style="top:834px;left:219px;width:1584px"><span class="c R n" style="left:0px;width:29px">0</span><span class="c R n" style="left:29px;width:40px">0</span><span class="c R n" style="left:69px;width:40px">0</span><span class="c L" style="left:109px;width:45px">OW</span><span class="c L" style="left:154px;width:45px">MCO</span><span class="c L" style="left:199px;width:45px">LHR</span><span class="c L" style="left:244px;width:35px">Fri</span><span class="c L d" style="left:279px;width:65px">17/03/2023</span><span class="c L n" style="left:344px;width:40px">19:50</span><span class="c L" style="left:384px;width:35px">Sat</span><span class="c R" style="left:529px;width:65px">-</span><span class="c R" style="left:594px;width:65px">-</span><span class="c R n" style="left:659px;width:65px">1,188.00</span><span class="c R n" style="left:724px;width:65px">2,178.00</span><span class="c L d" style="left:789px;width:65px">23/07/2021</span><span class="c L" style="left:854px;width:85px">Virgin Atlanti...</span><span class="c L" style="left:939px;width:45px">Y</span><span class="c L" style="left:984px;width:45px">?</span><span class="c L" style="left:1029px;width:85px">Advanced Req</span><span class="c R" style="left:1114px;width:65px">-</span><span class="c L" style="left:1179px;width:40px">COM</span><span class="c R" style="left:1219px;width:65px">-</span><span class="c L n" style="left:1454px;width:40px">11:43</span><span class="c R n" style="left:1494px;width:25px">43</span></div>
<div class="row drow" style="top:849px;left:219px;width:1584px"><span class="c R n" style="left:0px;width:29px">0</span><span class="c R n" style="left:29px;width:40px">0</span><span class="c R n" style="left:69px;width:40px">0</span><span class="c L" style="left:109px;width:45px">OW</span><span class="c L" style="left:154px;width:45px">MCO</span><span class="c L" style="left:199px;width:45px">LHR</span><span class="c L" style="left:244px;width:35px">Sat</span><span class="c L d" style="left:279px;width:65px">18/03/2023</span><span class="c L n" style="left:344px;width:40px">19:50</span><span class="c L" style="left:384px;width:35px">Sun</span><span class="c R" style="left:529px;width:65px">-</span><span class="c R" style="left:594px;width:65px">-</span><span class="c R n" style="left:659px;width:65px">1,188.00</span><span class="c R n" style="left:724px;width:65px">2,178.00</span><span class="c L d" style="left:789px;width:65px">23/07/2021</span><span class="c L" style="left:854px;width:85px">Virgin Atlanti...</span><span class="c L" style="left:939px;width:45px">Y</span><span class="c L" style="left:984px;width:45px">?</span><span class="c L" style="left:1029px;width:85px">Advanced Req</span><span class="c R" style="left:1114px;width:65px">-</span><span class="c L" style="left:1179px;width:40px">COM</span><span class="c R" style="left:1219px;width:65px">-</span><span class="c L n" style="left:1454px;width:40px">11:43</span><span class="c R n" style="left:1494px;width:25px">45</span></div>
<div class="row drow" style="top:864px;left:219px;width:1584px"><span class="c R n" style="left:0px;width:29px">0</span><span class="c R n" style="left:29px;width:40px">0</span><span class="c R n" style="left:69px;width:40px">0</span><span class="c L" style="left:109px;width:45px">OW</span><span class="c L" style="left:154px;width:45px">MCO</span><span class="c L" style="left:199px;width:45px">LHR</span><span class="c L" style="left:244px;width:35px">Sun</span><span class="c L d" style="left:279px;width:65px">19/03/2023</span><span class="c L n" style="left:344px;width:40px">19:50</span><span class="c L" style="left:384px;width:35px">Mon</span><span class="c R" style="left:529px;width:65px">-</span><span class="c R" style="left:594px;width:65px">-</span><span class="c R n" style="left:659px;width:65px">1,188.00</span><span class="c R n" style="left:724px;width:65px">2,178.00</span><span class="c L d" style="left:789px;width:65px">23/07/2021</span><span class="c L" style="left:854px;width:85px">Virgin Atlanti...</span><span class="c L" style="left:939px;width:45px">Y</span><span class="c L" style="left:984px;width:45px">?</span><span class="c L" style="left:1029px;width:85px">Advanced Req</span><span class="c R" style="left:1114px;width:65px">-</span><span class="c L" style="left:1179px;width:40px">COM</span><span class="c R" style="left:1219px;width:65px">-</span><span class="c L n" style="left:1454px;width:40px">11:43</span><span class="c R n" style="left:1494px;width:25px">42</span></div>
<div class="vg" style="top:550px;left:248px;height:329px"></div>
<div class="vg" style="top:550px;left:288px;height:329px"></div>
<div class="vg" style="top:550px;left:328px;height:329px"></div>
<div class="vg" style="top:550px;left:373px;height:329px"></div>
<div class="vg" style="top:550px;left:418px;height:329px"></div>
<div class="vg" style="top:550px;left:463px;height:329px"></div>
<div class="vg" style="top:550px;left:498px;height:329px"></div>
<div class="vg" style="top:550px;left:563px;height:329px"></div>
<div class="vg" style="top:550px;left:603px;height:329px"></div>
<div class="vg" style="top:550px;left:638px;height:329px"></div>
<div class="vg" style="top:550px;left:708px;height:329px"></div>
<div class="vg" style="top:550px;left:748px;height:329px"></div>
<div class="vg" style="top:550px;left:813px;height:329px"></div>
<div class="vg" style="top:550px;left:878px;height:329px"></div>
<div class="vg" style="top:550px;left:943px;height:329px"></div>
<div class="vg" style="top:550px;left:1008px;height:329px"></div>
<div class="vg" style="top:550px;left:1073px;height:329px"></div>
<div class="vg" style="top:550px;left:1158px;height:329px"></div>
<div class="vg" style="top:550px;left:1203px;height:329px"></div>
<div class="vg" style="top:550px;left:1248px;height:329px"></div>
<div class="vg" style="top:550px;left:1333px;height:329px"></div>
<div class="vg" style="top:550px;left:1398px;height:329px"></div>
<div class="vg" style="top:550px;left:1438px;height:329px"></div>
<div class="vg" style="top:550px;left:1503px;height:329px"></div>
<div class="vg" style="top:550px;left:1563px;height:329px"></div>
<div class="vg" style="top:550px;left:1673px;height:329px"></div>
<div class="vg" style="top:550px;left:1713px;height:329px"></div>
<div class="vg" style="top:550px;left:1738px;height:329px"></div>
<div class="vg" style="top:550px;left:1803px;height:329px"></div>
<div class="row sel2" style="top:625px;left:219px;width:1688px"><span class="c R n" style="left:0px;width:29px">0</span><span class="c R n" style="left:29px;width:40px">0</span><span class="c R n" style="left:69px;width:40px">0</span><span class="c L" style="left:109px;width:45px">OW</span><span class="c L" style="left:154px;width:45px">MCO</span><span class="c L" style="left:199px;width:45px">LHR</span><span class="c L" style="left:244px;width:35px">Mon</span><span class="c L d" style="left:279px;width:65px">20/03/2023</span><span class="c L n" style="left:344px;width:40px">19:55</span><span class="c L" style="left:384px;width:35px">Tue</span><span class="c R n" style="left:529px;width:65px">550.00</span><span class="c R n" style="left:594px;width:65px">440.00</span><span class="c R n" style="left:659px;width:65px">990.00</span><span class="c R n" style="left:724px;width:65px">1,980.00</span><span class="c L d" style="left:789px;width:65px">23/07/2021</span><span class="c L" style="left:854px;width:85px">British Airways</span><span class="c L" style="left:939px;width:45px">Y</span><span class="c L" style="left:984px;width:45px">?</span><span class="c L" style="left:1029px;width:85px">Advanced Req</span><span class="c R n" style="left:1114px;width:65px">550.00</span><span class="c L" style="left:1179px;width:40px">COM</span><span class="c R n" style="left:1219px;width:65px">440.00</span><span class="c L n" style="left:1454px;width:40px">11:43</span><span class="c R n" style="left:1494px;width:25px">45</span></div>

<div class="txt" style="left:222px;top:926px">First portion: 2.2 sec, total search time: 170.2 sec</div>
<div class="a" style="left:1889px;top:924px;font-family:'Liberation Serif',serif;font-weight:bold;font-size:17px;line-height:18px;color:#1a4f8f">i</div>

<!-- bottom tabs -->
<div class="a" style="left:214px;top:949px;width:1699px;height:1px;background:#a0a0a0"></div>
<div class="a" style="left:214px;top:950px;width:59px;height:19px;border-right:1px solid #c8c8c8;box-sizing:border-box"></div>
<div class="txt" style="left:218px;top:952px">Summary</div>
<div class="a" style="left:273px;top:950px;width:44px;height:19px;border-right:1px solid #c8c8c8;box-sizing:border-box"></div>
<div class="txt" style="left:277px;top:952px">Search</div>
<div class="a" style="left:317px;top:950px;width:121px;height:19px;background:#000080;border-radius:2px 2px 0 0"></div>
<div class="txt" style="left:320px;top:952px;color:#fff">Flt 2A,2C LGW MCO...</div>
<div class="a" style="left:438px;top:950px;width:120px;height:19px;background:#c6c6ff"></div>
<div class="txt" style="left:443px;top:952px">Acc 2A,2C MCO; 03...</div>
<div class="a" style="left:558px;top:950px;width:120px;height:19px;background:#c6ffc6"></div>
<div class="txt" style="left:563px;top:952px">Acc 2A,2C MCO; 06...</div>
<div class="a" style="left:678px;top:950px;width:110px;height:19px;border-left:1px solid #c8c8c8;border-right:1px solid #c8c8c8;box-sizing:border-box"></div>
<div class="txt" style="left:683px;top:952px">Financial Summary</div>
<div class="a" style="left:788px;top:950px;width:112px;height:19px;border-right:1px solid #c8c8c8;box-sizing:border-box"></div>
<div class="txt" style="left:792px;top:952px;font-size:12px">Identity Documents</div>

<!-- status bar -->
<div class="txt" style="left:220px;top:978px">User: 730 - Danielle Howe</div>
<div class="txt" style="left:365px;top:978px">Retailer: 'Ocean-Florida'</div>
<div class="txt" style="left:502px;top:978px">Client: none</div>
<div class="txt" style="left:964px;top:978px">12:17 GMT</div>
<div class="txt" style="left:1824px;top:978px">405/851</div>

<!-- taskbar -->
<div class="a" style="left:0;top:1002px;width:1920px;height:40px;background:#050b14"></div>
<svg class="a" style="left:15px;top:1013px" width="18" height="18"><path d="M0 2.5 L7.5 1.4 V8.5 H0Z M8.5 1.2 L17 0 V8.5 H8.5Z M0 9.5 H7.5 V16.6 L0 15.5Z M8.5 9.5 H17 V18 L8.5 16.8Z" fill="#fff"/></svg>
<svg class="a" style="left:63px;top:1013px" width="18" height="18"><path d="M1 4.5 H11 V12.5 H1Z" fill="none" stroke="#fff" stroke-width="1"/><path d="M1 1.5 H11 M1 15.5 H11 M15 0.5 V3 M15 5 V16" stroke="#fff" stroke-width="1"/></svg>
<div class="a" style="left:99px;top:1002px;width:160px;height:40px;background:#333a44"></div>
<div class="a" style="left:99px;top:1040px;width:160px;height:2px;background:#76b9ed"></div>
<div class="a" style="left:109px;top:1010px;width:24px;height:24px;background:#fff"></div>
<svg class="a" style="left:109px;top:1010px" width="24" height="24"><defs><radialGradient id="og" cx="0.3" cy="0.25" r="0.9"><stop offset="0" stop-color="#fde05a"/><stop offset="0.4" stop-color="#f2ac22"/><stop offset="0.75" stop-color="#c05418"/><stop offset="1" stop-color="#a8400f"/></radialGradient></defs><path d="M1.6 10.7 Q2 8 5.1 4.3 L21.5 8.6 Q22.5 9.5 21.6 10.5 L13.2 19.2 Q12.4 19.8 11.6 19.2 Z" fill="url(#og)"/></svg>
<div class="txt" style="left:137px;top:1015px;color:#fff;font-size:12px">Interactive - Ocean...</div>
<svg class="a" style="left:1729px;top:1013px" width="16" height="16"><rect x="1" y="1" width="6" height="7" fill="#f0b020"/><rect x="8" y="2" width="7" height="6" fill="#2090d0"/><rect x="1" y="8" width="6" height="7" fill="#40a040"/><rect x="8" y="8" width="7" height="7" fill="#e04020"/></svg>
<svg class="a" style="left:1752px;top:1013px" width="18" height="17"><path d="M4.5 2.5 H16.5 V11.5 H4.5Z M9 15.5 H14 M11.5 11.5 V15.5 M3.5 1 V15 M1.5 3 H6" stroke="#fff" stroke-width="1" fill="none"/></svg>
<svg class="a" style="left:1776px;top:1013px" width="16" height="17"><path d="M0.5 6 H3 L6.5 2.5 V13.5 L3 10 H0.5Z" fill="none" stroke="#fff"/><circle cx="11.5" cy="11.5" r="4.5" fill="#e03a3a"/><path d="M9.5 9.5 L13.5 13.5 M13.5 9.5 L9.5 13.5" stroke="#fff" stroke-width="1.2"/></svg>
<div class="txt" style="left:1800px;top:1006px;width:64px;text-align:center;color:#fff;font-size:12px;-webkit-text-stroke:0">12:17</div>
<div class="txt" style="left:1800px;top:1024px;width:64px;text-align:center;color:#fff;font-size:12px;-webkit-text-stroke:0">23/07/2021</div>
<svg class="a" style="left:1879px;top:1013px" width="18" height="18"><path d="M1.5 1.5 H16.5 V13.5 H10.5 L9 16 L7.5 13.5 H1.5Z" fill="none" stroke="#fff" stroke-width="1"/></svg>
<div class="a" style="left:1915px;top:1002px;width:1px;height:40px;background:#5a6068"></div>

</body></html>
